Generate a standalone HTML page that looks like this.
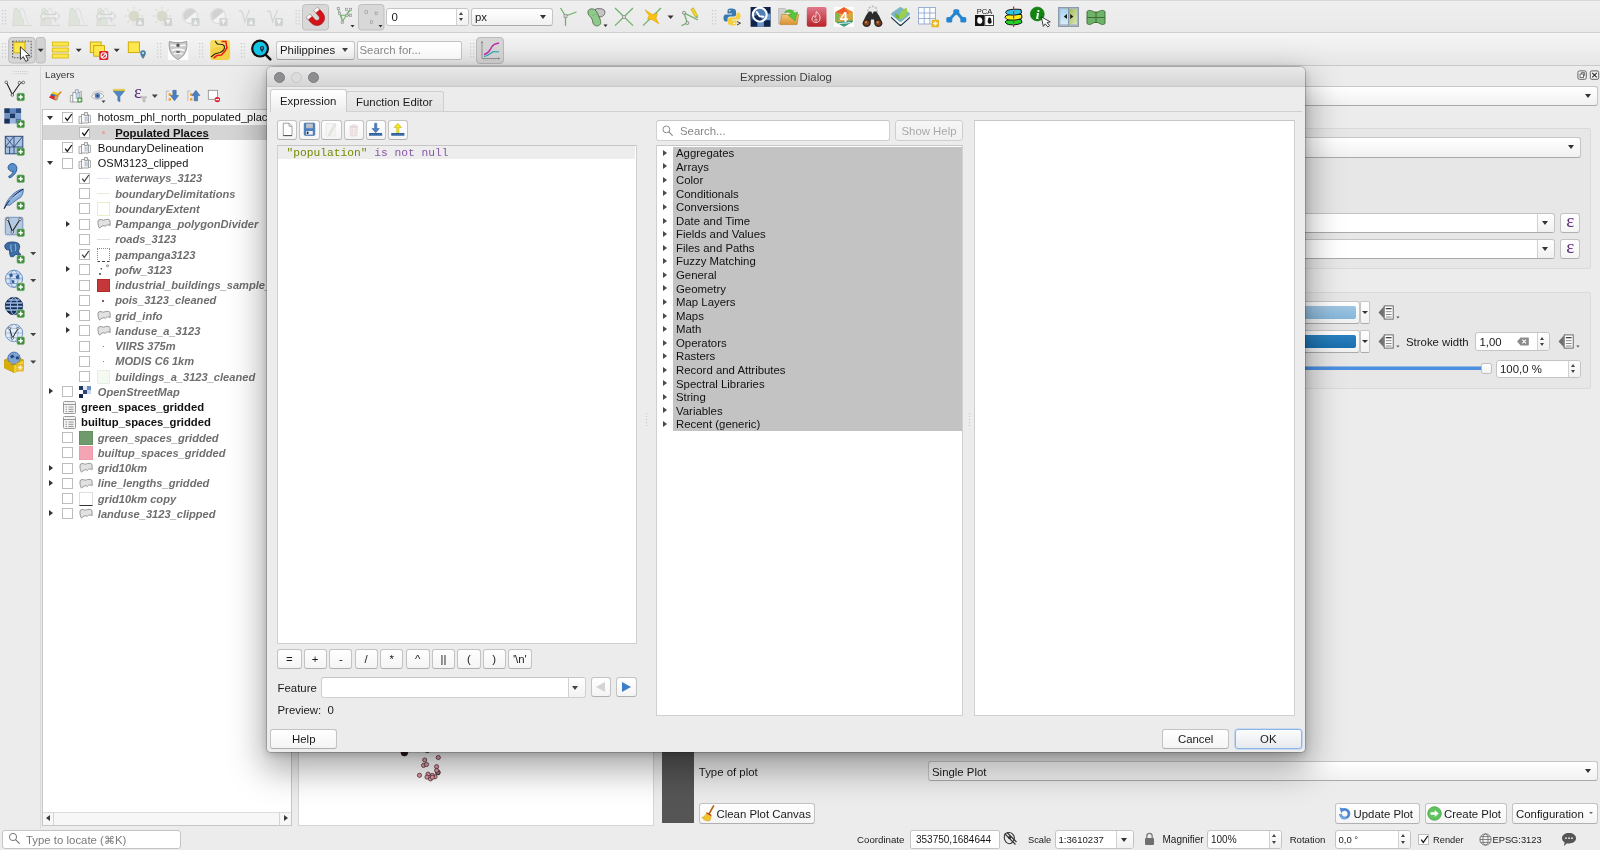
<!DOCTYPE html>
<html><head><meta charset="utf-8"><title>QGIS Expression Dialog</title>
<style>
*{box-sizing:border-box;margin:0;padding:0}
html,body{width:1600px;height:850px;overflow:hidden}
body{background:#ececec;font-family:"Liberation Sans",sans-serif;font-size:11.4px;color:#1a1a1a;position:relative}
.abs{position:absolute}
.t{position:absolute;white-space:nowrap;line-height:14px}
/* toolbars */
#tb1{position:absolute;left:0;top:0;width:1600px;height:33px;background:linear-gradient(#efefef,#e9e9e9);border-top:1px solid #d9d9d9;border-bottom:1px solid #cfcfcf}
#tb2{position:absolute;left:0;top:33px;width:1600px;height:33px;background:linear-gradient(#f5f5f5,#e7e7e7);border-bottom:1px solid #cacaca}
.btn{position:absolute;background:linear-gradient(#ffffff,#f4f4f4);border:1px solid #c3c3c3;border-bottom-color:#b0b0b0;border-radius:3px;text-align:center;line-height:18px}
.field{position:absolute;background:#fff;border:1px solid #d0d0d0;border-top-color:#c6c6c6}
.cb{position:absolute;width:11px;height:11px;background:#fff;border:1px solid #bdbdbd}
/* dialog */
#dlg{position:absolute;left:267px;top:67px;width:1038px;height:685px;background:#ececec;border-radius:5px 5px 4px 4px;box-shadow:0 0 0 1px rgba(0,0,0,.18),0 14px 34px 4px rgba(0,0,0,.34),0 2px 8px rgba(0,0,0,.2)}
#dlgtitle{position:absolute;left:0;top:0;width:100%;height:19.6px;background:linear-gradient(#e8e8e8,#d5d5d5);border-radius:5px 5px 0 0;border-bottom:1px solid #c9c9c9}
#root{position:absolute;left:0;top:0;width:1600px;height:850px;will-change:transform;background:transparent}
</style></head><body>
<div id="root">
<svg width="0" height="0" style="position:absolute"><defs>
<g id="i-grp"><path d="M1 5.5 h3 v7 h-3z" fill="#f4f4f4" stroke="#9a9a9a" stroke-width=".8"/><path d="M3.5 3.5 h7 v8.5 h-7z" fill="#fafafa" stroke="#8a8a8a" stroke-width=".8"/><path d="M6.5 1.5 h3 v3 h-3z" fill="#eee" stroke="#8a8a8a" stroke-width=".8"/><path d="M7.2 5.5 v5 M9 5.5 v5" stroke="#8aa6c8" stroke-width=".9"/><path d="M10.5 4.5 h2 v7 h-2" fill="none" stroke="#9a9a9a" stroke-width=".8"/></g>
<g id="i-poly"><path d="M1 3 C1.5 1 4 1.5 6.5 2.2 C9 1.2 12 .8 13 2.5 L13.2 7.5 C11.5 6.8 9.5 6.5 8.3 8.3 C6.8 7 4 8 2.6 10.2 C1.5 9 .8 6 1 3z" fill="#e2e2e2" stroke="#8d8d8d" stroke-width=".9"/></g>
<g id="i-raster"><rect width="12" height="12" fill="#fff"/><rect x="0" y="0" width="4" height="4" fill="#1f3a63"/><rect x="8" y="0" width="4" height="4" fill="#6d8fc0"/><rect x="4" y="4" width="4" height="4" fill="#27477a"/><rect x="0" y="8" width="4" height="4" fill="#16294a"/><rect x="8" y="4" width="4" height="4" fill="#c7d5ea"/><rect x="4" y="0" width="4" height="4" fill="#dfe8f5"/></g>
<g id="i-table"><rect x=".5" y=".5" width="12" height="12" rx="1" fill="#f3f3f3" stroke="#999"/><path d="M.5 3.5 h12 M2.5 6 h1.5 M5.5 6 h5 M2.5 8.3 h1.5 M5.5 8.3 h5 M2.5 10.5 h1.5 M5.5 10.5 h5" stroke="#8c8c8c" stroke-width=".9"/></g>
<g id="i-dd"><path d="M.5 7.4 L5.8 1.6 V13.2z" fill="#707070"/><rect x="6.2" y=".9" width="9" height="13.2" fill="#fff" stroke="#5a5a5a" stroke-width=".9"/><path d="M7.8 3.7 h5.8" stroke="#222" stroke-width="1.1"/><path d="M7.8 6.7 h5.8 M7.8 9.5 h5.8 M7.8 12 h5.8" stroke="#6a6a6a" stroke-width=".8"/><path d="M18.3 11.6 h3.2 l-1.6 2z" fill="#555"/></g>
<g id="i-broom"><path d="M12.5 1 L8 9" stroke="#b5651d" stroke-width="1.6" stroke-linecap="round"/><path d="M5.5 7.5 L10.5 10.3 L9 15.5 C6 16.5 2.5 15 1 12.5 C3.5 12 5 10 5.5 7.5z" fill="#f2c52e" stroke="#c99a14" stroke-width=".6"/><path d="M5.8 8 L10 10.3" stroke="#c0392b" stroke-width="1.4"/></g>
<g id="i-refresh"><path d="M3.4 7.9 a4.3 4.3 0 1 0 2.2 -3.9" fill="none" stroke="#4c88d2" stroke-width="2.7"/><path d="M2.6 1.6 L7.8 2.9 L4.2 7z" fill="#4c88d2"/><path d="M3.4 7.9 a4.3 4.3 0 0 0 6 4" fill="none" stroke="#86b3e6" stroke-width="1.2"/></g>
<g id="i-go"><circle cx="7.5" cy="7.5" r="6.8" fill="#5fc25c" stroke="#3f9e3d" stroke-width=".7"/><path d="M3.5 6.3 h4.2 v-2.4 l4 3.6 l-4 3.6 v-2.4 h-4.2z" fill="#fff"/></g>
<g id="i-extent"><path d="M2 3 C4 1 8 1 9.5 3 C12 5 12 9 9.5 11 C8 13.5 4.5 13 3 11 C1 9 .8 5 2 3z" fill="none" stroke="#333" stroke-width="1.1"/><path d="M2 3 L12.5 13.5 M4 1.5 L13.5 11" stroke="#333" stroke-width="1.1"/><circle cx="6.5" cy="6.5" r="1.6" fill="#333"/></g>
<g id="i-crs"><circle cx="6.5" cy="6.5" r="5.6" fill="#f4f4f4" stroke="#666" stroke-width=".9"/><ellipse cx="6.5" cy="6.5" rx="2.6" ry="5.6" fill="none" stroke="#666" stroke-width=".8"/><path d="M1 6.5 h11 M1.8 3.6 h9.4 M1.8 9.4 h9.4" stroke="#666" stroke-width=".8"/></g>
<g id="i-msg"><path d="M1 6.2 C1 3 4 1 8 1 C12 1 15 3 15 6.2 C15 9.4 12 11.4 8 11.4 C7.3 11.4 6.7 11.35 6 11.2 L3 14 L3.6 10.3 C2 9.4 1 8 1 6.2z" fill="#555"/><circle cx="5" cy="6.2" r=".9" fill="#eee"/><circle cx="8" cy="6.2" r=".9" fill="#eee"/><circle cx="11" cy="6.2" r=".9" fill="#eee"/></g>
</defs></svg>
<div id="tb1"></div>
<div id="tb2"></div>
<div id="tbicons">
<svg class="abs" style="left:0;top:0" width="1600" height="66" viewBox="0 0 1600 66"><rect x="2.0" y="10.0" width="1.2" height="1.2" fill="#c9c9c9"/><rect x="5.0" y="10.0" width="1.2" height="1.2" fill="#c9c9c9"/><rect x="2.0" y="13.3" width="1.2" height="1.2" fill="#c9c9c9"/><rect x="5.0" y="13.3" width="1.2" height="1.2" fill="#c9c9c9"/><rect x="2.0" y="16.6" width="1.2" height="1.2" fill="#c9c9c9"/><rect x="5.0" y="16.6" width="1.2" height="1.2" fill="#c9c9c9"/><rect x="2.0" y="19.9" width="1.2" height="1.2" fill="#c9c9c9"/><rect x="5.0" y="19.9" width="1.2" height="1.2" fill="#c9c9c9"/><rect x="2.0" y="23.2" width="1.2" height="1.2" fill="#c9c9c9"/><rect x="5.0" y="23.2" width="1.2" height="1.2" fill="#c9c9c9"/><rect x="295.5" y="10.0" width="1.2" height="1.2" fill="#c9c9c9"/><rect x="298.5" y="10.0" width="1.2" height="1.2" fill="#c9c9c9"/><rect x="295.5" y="13.3" width="1.2" height="1.2" fill="#c9c9c9"/><rect x="298.5" y="13.3" width="1.2" height="1.2" fill="#c9c9c9"/><rect x="295.5" y="16.6" width="1.2" height="1.2" fill="#c9c9c9"/><rect x="298.5" y="16.6" width="1.2" height="1.2" fill="#c9c9c9"/><rect x="295.5" y="19.9" width="1.2" height="1.2" fill="#c9c9c9"/><rect x="298.5" y="19.9" width="1.2" height="1.2" fill="#c9c9c9"/><rect x="295.5" y="23.2" width="1.2" height="1.2" fill="#c9c9c9"/><rect x="298.5" y="23.2" width="1.2" height="1.2" fill="#c9c9c9"/><rect x="712.0" y="10.0" width="1.2" height="1.2" fill="#c9c9c9"/><rect x="715.0" y="10.0" width="1.2" height="1.2" fill="#c9c9c9"/><rect x="712.0" y="13.3" width="1.2" height="1.2" fill="#c9c9c9"/><rect x="715.0" y="13.3" width="1.2" height="1.2" fill="#c9c9c9"/><rect x="712.0" y="16.6" width="1.2" height="1.2" fill="#c9c9c9"/><rect x="715.0" y="16.6" width="1.2" height="1.2" fill="#c9c9c9"/><rect x="712.0" y="19.9" width="1.2" height="1.2" fill="#c9c9c9"/><rect x="715.0" y="19.9" width="1.2" height="1.2" fill="#c9c9c9"/><rect x="712.0" y="23.2" width="1.2" height="1.2" fill="#c9c9c9"/><rect x="715.0" y="23.2" width="1.2" height="1.2" fill="#c9c9c9"/><rect x="2.0" y="43.0" width="1.2" height="1.2" fill="#c9c9c9"/><rect x="5.0" y="43.0" width="1.2" height="1.2" fill="#c9c9c9"/><rect x="2.0" y="46.3" width="1.2" height="1.2" fill="#c9c9c9"/><rect x="5.0" y="46.3" width="1.2" height="1.2" fill="#c9c9c9"/><rect x="2.0" y="49.6" width="1.2" height="1.2" fill="#c9c9c9"/><rect x="5.0" y="49.6" width="1.2" height="1.2" fill="#c9c9c9"/><rect x="2.0" y="52.9" width="1.2" height="1.2" fill="#c9c9c9"/><rect x="5.0" y="52.9" width="1.2" height="1.2" fill="#c9c9c9"/><rect x="2.0" y="56.2" width="1.2" height="1.2" fill="#c9c9c9"/><rect x="5.0" y="56.2" width="1.2" height="1.2" fill="#c9c9c9"/><rect x="157.0" y="43.0" width="1.2" height="1.2" fill="#c9c9c9"/><rect x="160.0" y="43.0" width="1.2" height="1.2" fill="#c9c9c9"/><rect x="157.0" y="46.3" width="1.2" height="1.2" fill="#c9c9c9"/><rect x="160.0" y="46.3" width="1.2" height="1.2" fill="#c9c9c9"/><rect x="157.0" y="49.6" width="1.2" height="1.2" fill="#c9c9c9"/><rect x="160.0" y="49.6" width="1.2" height="1.2" fill="#c9c9c9"/><rect x="157.0" y="52.9" width="1.2" height="1.2" fill="#c9c9c9"/><rect x="160.0" y="52.9" width="1.2" height="1.2" fill="#c9c9c9"/><rect x="157.0" y="56.2" width="1.2" height="1.2" fill="#c9c9c9"/><rect x="160.0" y="56.2" width="1.2" height="1.2" fill="#c9c9c9"/><rect x="199.0" y="43.0" width="1.2" height="1.2" fill="#c9c9c9"/><rect x="202.0" y="43.0" width="1.2" height="1.2" fill="#c9c9c9"/><rect x="199.0" y="46.3" width="1.2" height="1.2" fill="#c9c9c9"/><rect x="202.0" y="46.3" width="1.2" height="1.2" fill="#c9c9c9"/><rect x="199.0" y="49.6" width="1.2" height="1.2" fill="#c9c9c9"/><rect x="202.0" y="49.6" width="1.2" height="1.2" fill="#c9c9c9"/><rect x="199.0" y="52.9" width="1.2" height="1.2" fill="#c9c9c9"/><rect x="202.0" y="52.9" width="1.2" height="1.2" fill="#c9c9c9"/><rect x="199.0" y="56.2" width="1.2" height="1.2" fill="#c9c9c9"/><rect x="202.0" y="56.2" width="1.2" height="1.2" fill="#c9c9c9"/><rect x="240.8" y="43.0" width="1.2" height="1.2" fill="#c9c9c9"/><rect x="243.8" y="43.0" width="1.2" height="1.2" fill="#c9c9c9"/><rect x="240.8" y="46.3" width="1.2" height="1.2" fill="#c9c9c9"/><rect x="243.8" y="46.3" width="1.2" height="1.2" fill="#c9c9c9"/><rect x="240.8" y="49.6" width="1.2" height="1.2" fill="#c9c9c9"/><rect x="243.8" y="49.6" width="1.2" height="1.2" fill="#c9c9c9"/><rect x="240.8" y="52.9" width="1.2" height="1.2" fill="#c9c9c9"/><rect x="243.8" y="52.9" width="1.2" height="1.2" fill="#c9c9c9"/><rect x="240.8" y="56.2" width="1.2" height="1.2" fill="#c9c9c9"/><rect x="243.8" y="56.2" width="1.2" height="1.2" fill="#c9c9c9"/><rect x="470.0" y="43.0" width="1.2" height="1.2" fill="#c9c9c9"/><rect x="473.0" y="43.0" width="1.2" height="1.2" fill="#c9c9c9"/><rect x="470.0" y="46.3" width="1.2" height="1.2" fill="#c9c9c9"/><rect x="473.0" y="46.3" width="1.2" height="1.2" fill="#c9c9c9"/><rect x="470.0" y="49.6" width="1.2" height="1.2" fill="#c9c9c9"/><rect x="473.0" y="49.6" width="1.2" height="1.2" fill="#c9c9c9"/><rect x="470.0" y="52.9" width="1.2" height="1.2" fill="#c9c9c9"/><rect x="473.0" y="52.9" width="1.2" height="1.2" fill="#c9c9c9"/><rect x="470.0" y="56.2" width="1.2" height="1.2" fill="#c9c9c9"/><rect x="473.0" y="56.2" width="1.2" height="1.2" fill="#c9c9c9"/>


<path d="M12.8 25.5 L13.8 11 Q14.5 8 16.0 8 Q19.0 9 20.5 14 Q22.0 22 24.5 25.5z" fill="#dde4da" stroke="#d3d8d0" stroke-width=".7"/><path d="M19.5 11 Q20.5 8 22.0 8 Q24.0 9 25.0 14 C26.2 21 28.2 25 31.7 25.5 L24.5 25.5 Q22.0 22 20.5 14z" fill="#ececec" stroke="#d9d9d9" stroke-width=".7"/><path d="M14.1 18 V25.5 M23.5 18 V25.5" stroke="#ead9d9" stroke-width=".9"/><path d="M12.0 25.7 H32.0" stroke="#d6d9d3" stroke-width=".8"/>
<path d="M40.8 25.5 L41.8 11 Q42.5 8 44.0 8 Q47.0 9 48.5 14 Q50.0 22 52.5 25.5z" fill="#dde4da" stroke="#d3d8d0" stroke-width=".7"/><path d="M47.5 11 Q48.5 8 50.0 8 Q52.0 9 53.0 14 C54.2 21 56.2 25 59.7 25.5 L52.5 25.5 Q50.0 22 48.5 14z" fill="#ececec" stroke="#d9d9d9" stroke-width=".7"/><path d="M42.1 18 V25.5 M51.5 18 V25.5" stroke="#ead9d9" stroke-width=".9"/><path d="M40.0 25.7 H60.0" stroke="#d6d9d3" stroke-width=".8"/><path d="M40 16.3 l4.6 -4.5 v2.8 h10.8 v-2.8 l4.6 4.5 l-4.6 4.5 v-2.8 h-10.8 v2.8z" fill="#f0f0f0" fill-opacity=".55" stroke="#cfcfcf" stroke-width="1"/>
<path d="M68.8 25.5 L69.8 11 Q70.5 8 72.0 8 Q75.0 9 76.5 14 Q78.0 22 80.5 25.5z" fill="#dde4da" stroke="#d3d8d0" stroke-width=".7"/><path d="M75.5 11 Q76.5 8 78.0 8 Q80.0 9 81.0 14 C82.2 21 84.2 25 87.7 25.5 L80.5 25.5 Q78.0 22 76.5 14z" fill="#ececec" stroke="#d9d9d9" stroke-width=".7"/><path d="M70.1 18 V25.5 M79.5 18 V25.5" stroke="#ead9d9" stroke-width=".9"/><path d="M68.0 25.7 H88.0" stroke="#d6d9d3" stroke-width=".8"/>
<path d="M96.8 25.5 L97.8 11 Q98.5 8 100.0 8 Q103.0 9 104.5 14 Q106.0 22 108.5 25.5z" fill="#dde4da" stroke="#d3d8d0" stroke-width=".7"/><path d="M103.5 11 Q104.5 8 106.0 8 Q108.0 9 109.0 14 C110.2 21 112.2 25 115.7 25.5 L108.5 25.5 Q106.0 22 104.5 14z" fill="#ececec" stroke="#d9d9d9" stroke-width=".7"/><path d="M98.1 18 V25.5 M107.5 18 V25.5" stroke="#ead9d9" stroke-width=".9"/><path d="M96.0 25.7 H116.0" stroke="#d6d9d3" stroke-width=".8"/><path d="M96 16.3 l4.6 -4.5 v2.8 h10.8 v-2.8 l4.6 4.5 l-4.6 4.5 v-2.8 h-10.8 v2.8z" fill="#f0f0f0" fill-opacity=".55" stroke="#cfcfcf" stroke-width="1"/>
<circle cx="134" cy="16" r="5.5" fill="#d9d9cb"/><path d="M141.2 16.0 L143.3 16.0" stroke="#d9d9cb" stroke-width="1.1"/><path d="M139.1 21.1 L140.6 22.6" stroke="#d9d9cb" stroke-width="1.1"/><path d="M134.0 23.2 L134.0 25.3" stroke="#d9d9cb" stroke-width="1.1"/><path d="M128.9 21.1 L127.4 22.6" stroke="#d9d9cb" stroke-width="1.1"/><path d="M126.8 16.0 L124.7 16.0" stroke="#d9d9cb" stroke-width="1.1"/><path d="M128.9 10.9 L127.4 9.4" stroke="#d9d9cb" stroke-width="1.1"/><path d="M134.0 8.8 L134.0 6.7" stroke="#d9d9cb" stroke-width="1.1"/><path d="M139.1 10.9 L140.6 9.4" stroke="#d9d9cb" stroke-width="1.1"/><rect x="136" y="18" width="8" height="8" rx="1" fill="#cfd3cf"/><path d="M137.6 24.5 L140 19.5 L142.4 24.5z" fill="#f2f2f2"/>
<circle cx="162" cy="16" r="5.5" fill="#d9d9cb"/><path d="M169.2 16.0 L171.3 16.0" stroke="#d9d9cb" stroke-width="1.1"/><path d="M167.1 21.1 L168.6 22.6" stroke="#d9d9cb" stroke-width="1.1"/><path d="M162.0 23.2 L162.0 25.3" stroke="#d9d9cb" stroke-width="1.1"/><path d="M156.9 21.1 L155.4 22.6" stroke="#d9d9cb" stroke-width="1.1"/><path d="M154.8 16.0 L152.7 16.0" stroke="#d9d9cb" stroke-width="1.1"/><path d="M156.9 10.9 L155.4 9.4" stroke="#d9d9cb" stroke-width="1.1"/><path d="M162.0 8.8 L162.0 6.7" stroke="#d9d9cb" stroke-width="1.1"/><path d="M167.1 10.9 L168.6 9.4" stroke="#d9d9cb" stroke-width="1.1"/><rect x="164" y="18" width="8" height="8" rx="1" fill="#cfd3cf"/><path d="M165.6 19.5 L168 24.5 L170.4 19.5z" fill="#f2f2f2"/>
<circle cx="190" cy="16" r="7.5" fill="#f3f3f3" stroke="#d9d9d9" stroke-width="1"/><path d="M185 20.5 A7 7 0 0 1 196 11.5z" fill="#d2d2d2"/><rect x="191.5" y="18" width="8" height="8" rx="1" fill="#cfd3cf"/><path d="M193.1 24.5 L195.5 19.5 L197.9 24.5z" fill="#f2f2f2"/>
<circle cx="218" cy="16" r="7.5" fill="#f3f3f3" stroke="#d9d9d9" stroke-width="1"/><path d="M213 20.5 A7 7 0 0 1 224 11.5z" fill="#d2d2d2"/><rect x="219.5" y="18" width="8" height="8" rx="1" fill="#cfd3cf"/><path d="M221.1 19.5 L223.5 24.5 L225.9 19.5z" fill="#f2f2f2"/>
<path d="M239 11.5 Q241 9.5 242.5 13 L245 23 M249.5 10 L245 21" fill="none" stroke="#d4d4d4" stroke-width="1.2"/><rect x="247" y="18" width="8" height="8" rx="1" fill="#cfd3cf"/><path d="M248.6 24.5 L251 19.5 L253.4 24.5z" fill="#f2f2f2"/>
<path d="M267 11.5 Q269 9.5 270.5 13 L273 23 M277.5 10 L273 21" fill="none" stroke="#d4d4d4" stroke-width="1.2"/><rect x="275" y="18" width="8" height="8" rx="1" fill="#cfd3cf"/><path d="M276.6 19.5 L279 24.5 L281.4 19.5z" fill="#f2f2f2"/>
<rect x="302.5" y="4.5" width="26" height="25.5" rx="3" fill="#d8d8d8" stroke="#bfbfbf" stroke-width="1"/>
<g transform="translate(316.3 17.2) rotate(-42)"><path d="M-7.6 -6.5 H-2.6 V1 A2.6 2.6 0 0 0 2.6 1 V-6.5 H7.6 V1 A7.6 7.6 0 0 1 -7.6 1z" fill="#d41217" stroke="#a30c10" stroke-width=".6"/><rect x="-7.6" y="-6.8" width="5" height="3.2" fill="#f6f6f6" stroke="#b0b0b0" stroke-width=".4"/><rect x="2.6" y="-6.8" width="5" height="3.2" fill="#f6f6f6" stroke="#b0b0b0" stroke-width=".4"/></g>
<path d="M338.5 10 L342.5 21.5 L349 10.5 M342.5 21.5 L341 15 L350 15.5 M345.8 16 L350.5 10" fill="none" stroke="#6fb36b" stroke-width="1.1"/>
<rect x="337.2" y="7.5" width="2.2" height="2.2" fill="#e4e4e4" stroke="#8c8c8c" stroke-width=".6"/>
<rect x="345.4" y="8.200000000000001" width="2.2" height="2.2" fill="#e4e4e4" stroke="#8c8c8c" stroke-width=".6"/>
<rect x="349.5" y="8.200000000000001" width="2.2" height="2.2" fill="#e4e4e4" stroke="#8c8c8c" stroke-width=".6"/>
<rect x="338.4" y="12.1" width="2.2" height="2.2" fill="#e4e4e4" stroke="#8c8c8c" stroke-width=".6"/>
<rect x="349.5" y="14.1" width="2.2" height="2.2" fill="#e4e4e4" stroke="#8c8c8c" stroke-width=".6"/>
<rect x="345.9" y="14.4" width="2.2" height="2.2" fill="#e4e4e4" stroke="#8c8c8c" stroke-width=".6"/>
<rect x="341.2" y="21.2" width="2.2" height="2.2" fill="#e4e4e4" stroke="#8c8c8c" stroke-width=".6"/>
<path d="M350.5 25 h4 l-2 2.4z" fill="#333"/>
<rect x="358.5" y="4.5" width="25.5" height="25.5" rx="3" fill="#d8d8d8" stroke="#bfbfbf" stroke-width="1"/>
<rect x="365.0" y="10.8" width="2.4" height="2.4" fill="#e2e2e2" stroke="#8a8a8a" stroke-width=".6"/>
<rect x="375.1" y="12.100000000000001" width="2.4" height="2.4" fill="#e2e2e2" stroke="#8a8a8a" stroke-width=".6"/>
<rect x="370.3" y="20.8" width="2.4" height="2.4" fill="#e2e2e2" stroke="#8a8a8a" stroke-width=".6"/>
<path d="M378.5 25 h4 l-2 2.4z" fill="#333"/>
<path d="M560.5 8 L565.5 16 L576.5 12 M565.5 16 V25.8" fill="none" stroke="#6db36a" stroke-width="1.3"/><rect x="564" y="14.6" width="3" height="3" fill="#d8d8d8" stroke="#8a8a8a" stroke-width=".7"/>
<path d="M595 9.5 C598 7.8 604 8.6 604.8 11 C605.3 14 603.5 16.8 600 17 L596.5 15z" fill="#c4c4c4" stroke="#555" stroke-width=".8"/><path d="M588 11.5 C588.5 8.8 592 8.2 594.5 9.5 C597.5 11.5 598 15 599.5 18 C601 21 601.5 24.5 598.5 25.6 C595.5 26.5 593.3 25 592.8 22.3 C592.5 19.5 591.5 18 590 16.5 C588.5 15 587.6 13.5 588 11.5z" fill="#8fca8b" stroke="#3f5f3c" stroke-width=".8"/><path d="M592.5 15.5 L596.5 14" stroke="#5f9a5b" stroke-width=".7" stroke-dasharray="1 .8"/><path d="M603.5 24.6 h4 l-2 2.4z" fill="#222"/>
<path d="M615 8 L633 25.6 M633 8 L615 25.6" stroke="#6db36a" stroke-width="1.3"/><rect x="622.5" y="15.4" width="3" height="3" fill="#d8d8d8" stroke="#8a8a8a" stroke-width=".7"/>
<path d="M643 25.6 L661 8" stroke="#6db36a" stroke-width="1.3"/><path d="M645 9.8 L652.3 14.6 L657.2 13.3 L656 18.6 L658.8 23.8 L652 19.4 L647.6 19.2 L649 15.5z" fill="#f7c30f" stroke="#e79d00" stroke-width=".6"/>
<path d="M667.6 15.6 h6 l-3 3.4z" fill="#333"/>
<path d="M684 12.8 L698 20 M684 12.8 L687.3 23 L681.5 25.6" fill="none" stroke="#6db36a" stroke-width="1.3"/><circle cx="684" cy="12.8" r="1.6" fill="#dcdcdc" stroke="#7a7a7a" stroke-width=".7"/><circle cx="687.3" cy="23" r="1.6" fill="#dcdcdc" stroke="#7a7a7a" stroke-width=".7"/><path d="M690.8 9.3 L693.4 7.8 L697.6 15.6 L697.4 17.8 L695.2 17z" fill="#f0d428" stroke="#b89b00" stroke-width=".5"/><path d="M695.2 17 L697.6 15.6 L697.4 17.8z" fill="#999"/>
<path d="M731.5 8.5 C727.5 8.5 727.5 10 727.5 11.5 V13.5 H732 V14.5 H726 C724 14.5 723.5 16 723.5 18 C723.5 20 724 21.5 726 21.5 H727.5 V19 C727.5 17.5 728.5 16.5 730 16.5 H734 C735.5 16.5 736 15.5 736 14.5 V11.5 C736 9.5 734.5 8.5 731.5 8.5z" fill="#3a7ab0"/><path d="M732.5 25.5 C736.5 25.5 736.5 24 736.5 22.5 V20.5 H732 V19.5 H738 C740 19.5 740.5 18 740.5 16 C740.5 14 740 12.5 738 12.5 H736.5 V15 C736.5 16.5 735.5 17.5 734 17.5 H730 C728.5 17.5 728 18.5 728 19.5 V22.5 C728 24.5 729.5 25.5 732.5 25.5z" fill="#f5cf3c"/><circle cx="729.7" cy="10.8" r=".8" fill="#fff"/><circle cx="734.3" cy="23.2" r=".8" fill="#fff"/><path d="M737 21.5 l3.5 1.7 l-3.5 1.7" fill="none" stroke="#222" stroke-width=".9"/>
<rect x="750.6" y="7" width="20" height="19.8" fill="#10244a"/><rect x="757.3" y="7" width="6.6" height="6.6" fill="#2b4a7e"/><rect x="750.6" y="13.6" width="6.7" height="6.6" fill="#2b4a7e"/><rect x="763.9" y="13.6" width="6.7" height="6.6" fill="#6b97cc"/><rect x="757.3" y="20.2" width="6.6" height="6.6" fill="#6b97cc"/><rect x="757.3" y="13.6" width="6.6" height="6.6" fill="#3f6aa6"/>
<circle cx="759.8" cy="14.6" r="6.9" fill="#4f7fb8" stroke="#fff" stroke-width="2.1"/><path d="M754 16 A6 6 0 0 0 762 20 L759.8 14.6z" fill="#142b55"/><path d="M756.8 12 L759.5 16.3 L763.5 16.8" fill="none" stroke="#fff" stroke-width="1.9" stroke-linecap="round" stroke-linejoin="round"/>
<path d="M778.6 8.5 h6.5 l1.5 1.8 h8.5 v13.5 h-16.5z" fill="#d0d0d0" stroke="#aaa" stroke-width=".6"/><path d="M786 10.5 h9.5 l1.8 2 v4 h-11.3z" fill="#f4f4f4" stroke="#bbb" stroke-width=".5"/><defs><linearGradient id="fo" x1="0" y1="0" x2="0" y2="1"><stop offset="0" stop-color="#f3c67a"/><stop offset="1" stop-color="#d8922e"/></linearGradient></defs><path d="M780 24.6 L781.8 14.5 H798.8 L797 24.6z" fill="url(#fo)" stroke="#b77a24" stroke-width=".6"/><path d="M784.5 12.5 C787 9 792.5 8.8 794.6 13 L797.6 12.2 L795 20.8 L788.3 15.4 L791.3 14.3 C790 12.3 787 12 784.5 12.5z" fill="#5cc33c" stroke="#3a9a22" stroke-width=".5"/>
<defs><linearGradient id="rg" x1="0" y1="0" x2="0" y2="1"><stop offset="0" stop-color="#e0788a"/><stop offset="1" stop-color="#b72226"/></linearGradient></defs><rect x="806.8" y="7" width="19.7" height="19.7" rx="2" fill="url(#rg)"/><path d="M816.5 11.5 C819 14 820.5 16 820 19 C819.5 21.5 818 22.5 816 22.5 C813.5 22.5 812 21 812 19 C812 17.5 813 16.5 813.8 15.5 C814 17 814.8 17.6 815.5 17.2 C816.5 15.5 815.5 13.5 816.5 11.5z" fill="none" stroke="#f7dfe0" stroke-width=".9"/><circle cx="816" cy="20" r="1.2" fill="none" stroke="#f7dfe0" stroke-width=".7"/>
<rect x="834" y="7" width="20" height="20" fill="#fdfdfd"/><path d="M844 7.3 L852.8 12.2 V21.8 L844 26.7 L835.2 21.8 V12.2z" fill="#e9a33a"/><path d="M844 7.3 L852.8 12.2 L844 14.5 L835.2 12.2z" fill="#ee5a2e"/><path d="M844 7.3 L852.8 12.2 L849 13.5z" fill="#f58a2c"/><path d="M835.2 12.2 L840 14 L838 23.3 L835.2 21.8z" fill="#86b34d"/><path d="M852.8 14 V21.8 L849.5 23.6 L848 16z" fill="#c9a845"/><path d="M836.5 22.5 C840 21 848 21.5 852.3 20 L852.8 21.8 L844 26.7z" fill="#2f9c86"/><path d="M838.5 23.7 C842 23 847 23.3 850.5 22.5" stroke="#fff" stroke-width=".9" fill="none"/><text x="844" y="22.3" text-anchor="middle" font-family="Liberation Sans,sans-serif" font-weight="bold" font-size="14" fill="#fff">4</text>
<circle cx="872.5" cy="11" r="4.6" fill="#eaeaea" stroke="#bdbdbd" stroke-width="1.6" stroke-dasharray="2 1.4"/><path d="M866 15.5 L868.8 11.5 H871.3 L872.5 14 L873.7 11.5 H876.2 L879 15.5 L882.5 23 A4.2 4.2 0 0 1 874.5 24.5 L874 19.5 H871 L870.5 24.5 A4.2 4.2 0 0 1 862.5 23z" fill="#2b2b2b"/><circle cx="866.7" cy="23" r="3.2" fill="#7a3f1d" stroke="#1d1d1d" stroke-width=".8"/><circle cx="878.3" cy="23" r="3.2" fill="#7a3f1d" stroke="#1d1d1d" stroke-width=".8"/><circle cx="866" cy="22.3" r="1.1" fill="#d98a4a"/><circle cx="877.6" cy="22.3" r="1.1" fill="#d98a4a"/>
<path d="M891.5 18.5 Q890.3 17.5 891.5 16.5 L899.3 10.5 Q900.5 9.7 901.7 10.5 L909.5 16.5 Q910.7 17.5 909.5 18.5 L901.7 25.5 Q900.5 26.5 899.3 25.5z" fill="#12303f"/><path d="M891.5 17 Q890.3 16 891.5 15 L899.3 9 Q900.5 8.2 901.7 9 L909.5 15 Q910.7 16 909.5 17 L901.7 24 Q900.5 25 899.3 24z" fill="#f3f6f7"/><path d="M891.5 15 Q890.3 14 891.5 13 L899.3 7.5 Q900.5 6.7 901.7 7.5 L909.5 13 Q910.7 14 909.5 15 L901.7 21.5 Q900.5 22.5 899.3 21.5z" fill="#7db4c6"/><path d="M895 13.5 C897.5 13.8 900 15.8 900.3 19.3 C897 19.5 895 17 895 13.5z" fill="#6db52c"/><path d="M899.5 19.5 C898.5 14 902 9.5 906.5 7.8 C908.5 12.5 906 18.5 899.5 19.5z" fill="#9bd14a"/>
<rect x="918.5" y="7.5" width="17" height="16.5" fill="#fbfcfe" stroke="#93a9cf" stroke-width=".9"/><path d="M924.2 7.5 V24 M929.8 7.5 V24 M918.5 13 H935.5 M918.5 18.5 H935.5" stroke="#93a9cf" stroke-width=".9"/><rect x="931.5" y="19.8" width="7.5" height="7.5" rx="1" fill="#e6b422"/><path d="M935.25 21 v5 M932.8 23.5 h5 M933.5 21.8 l3.5 3.5 M937 21.8 l-3.5 3.5" stroke="#fff8dc" stroke-width=".9"/>
<path d="M949.3 19.8 L956.3 12 L963.3 19.8" fill="none" stroke="#2585d0" stroke-width="2.8" stroke-linejoin="round"/><rect x="953.3" y="9.2" width="6" height="5.6" rx="1.6" fill="#2585d0"/><rect x="946.3" y="17" width="6" height="5.6" rx="1.6" fill="#2585d0"/><rect x="960.3" y="17" width="6" height="5.6" rx="1.6" fill="#2585d0"/>
<text x="984.5" y="14" text-anchor="middle" font-family="Liberation Sans,sans-serif" font-size="7.6" fill="#222">PCA</text><rect x="975" y="15" width="9.3" height="11" fill="#151515"/><rect x="984.8" y="15.4" width="8.8" height="10.2" fill="#fff" stroke="#151515" stroke-width=".8"/><path d="M978.5 17.3 C981 16.8 982.8 19 982.3 21.5 C981.8 23.8 979.3 24.5 977.8 23 C976.8 21.5 977 18.3 978.5 17.3z" fill="#fff"/><path d="M989 17.3 C990.8 17.5 991.5 19 991.3 20.5 C992.3 22 991.5 23.8 989.8 23.8 C988 23.8 987.3 22 987.8 20.3 C988 19 988.3 18 989 17.3z" fill="#151515"/>
<path d="M1006.5 20.5 C1010 19 1016 19 1021 19.5 L1022 22.5 C1019 25 1011 25.5 1007 24 L1005 22z" fill="#22d02a" stroke="#111" stroke-width="1"/><path d="M1006 15.5 C1010 14 1016 14 1021.5 14.5 L1022 18 C1018 20.5 1011 20.5 1007 19.5 L1005 17.5z" fill="#f4ee1e" stroke="#111" stroke-width="1"/><path d="M1007 10.5 C1011 9 1016 9 1021 9.5 L1021.5 13 C1018 15.5 1011 15.5 1007.5 14.5 L1005.5 12.5z" fill="#2fc4e6" stroke="#111" stroke-width="1"/><path d="M1013.6 6.5 V27" stroke="#ee1c25" stroke-width="1.2" stroke-dasharray="3.2 1.2"/>
<circle cx="1037.3" cy="14" r="7" fill="#108510" stroke="#0b6a0b" stroke-width=".5"/><text x="1037.6" y="18.6" text-anchor="middle" font-family="Liberation Serif,serif" font-style="italic" font-weight="bold" font-size="13.5" fill="#fff">i</text><path d="M1041.3 16.8 V26.6 L1043.7 24.5 L1045.6 28.1 L1047.6 27.1 L1045.8 23.6 H1049z" fill="#fff" stroke="#222" stroke-width=".8" transform="rotate(-12 1041.3 16.8)"/>
<defs><linearGradient id="sk" x1="0" y1="0" x2="0" y2="1"><stop offset="0" stop-color="#a6d3f0"/><stop offset="1" stop-color="#d8ecf8"/></linearGradient><linearGradient id="ol" x1="0" y1="0" x2="1" y2="1"><stop offset="0" stop-color="#9fbb55"/><stop offset="1" stop-color="#dde8b8"/></linearGradient></defs><rect x="1058.5" y="7.5" width="20" height="19" fill="#aab6c4" stroke="#8d9aab" stroke-width="1"/><rect x="1060.3" y="9" width="8" height="15.3" fill="url(#sk)"/><rect x="1069" y="9" width="7.8" height="15.3" fill="url(#ol)"/><path d="M1068.6 8 V25.5" stroke="#7d8da3" stroke-width=".9"/><path d="M1063.8 16.5 l3.2 -2.6 v5.2z M1073.4 16.5 l-3.2 -2.6 v5.2z" fill="#1a1a1a"/>
<path d="M1087 11.5 C1089 9.5 1092 10.5 1094 12 H1098 C1100 10.5 1103 9.5 1105 11.5 V23.5 C1103 25.5 1100 24 1098 22.5 H1094 C1092 24 1089 25.5 1087 23.5z" fill="#6fb36b" stroke="#35682f" stroke-width=".9"/><path d="M1087 17.5 H1105 M1096 12 V22.5" stroke="#35682f" stroke-width=".9"/>





<rect x="8.7" y="37.5" width="26.5" height="25.5" rx="3.5" fill="#d6d6d6" stroke="#bbb" stroke-width="1"/>
<rect x="36.2" y="37.5" width="9" height="25.5" rx="2.5" fill="#d3d3d3" stroke="#bdbdbd" stroke-width="1"/>
<path d="M37.7 48.7 h6 l-3 3.4z" fill="#333"/>
<rect x="12.6" y="41.2" width="18.6" height="16.6" fill="none" stroke="#555" stroke-width="1" stroke-dasharray="1.6 1.4"/><rect x="13.8" y="42.3" width="11.2" height="10.6" fill="#fde74c" stroke="#c9a500" stroke-width=".9"/><path d="M20.4 46.8 V59.3 L23.3 56.6 L25.8 61.4 L28.2 60.2 L25.8 55.6 H29.8z" fill="#fff" stroke="#222" stroke-width=".9"/>
<rect x="52.3" y="42" width="16" height="4" fill="#fde74c" stroke="#d4b106" stroke-width=".8"/>
<rect x="52.3" y="48" width="16" height="4" fill="#fde74c" stroke="#d4b106" stroke-width=".8"/>
<rect x="52.3" y="54" width="16" height="4" fill="#fde74c" stroke="#d4b106" stroke-width=".8"/>
<path d="M75.7 48.7 h6 l-3 3.4z" fill="#333"/>
<rect x="90.3" y="42" width="10.8" height="10.6" fill="#fde74c" stroke="#c9a500" stroke-width=".9"/><rect x="93.7" y="45.6" width="10.8" height="10.6" fill="#fde74c" stroke="#c9a500" stroke-width=".9"/><rect x="99.3" y="51" width="9" height="9" rx="1.2" fill="#dc2430"/><circle cx="103.8" cy="55.5" r="2.7" fill="none" stroke="#fff" stroke-width="1.1"/><path d="M101.9 57.4 L105.7 53.6" stroke="#fff" stroke-width="1.1"/>
<path d="M113.7 48.7 h6 l-3 3.4z" fill="#333"/>
<rect x="128.3" y="42" width="11.2" height="10.6" fill="#fde74c" stroke="#c9a500" stroke-width=".9"/><path d="M143 59 C141 56 140.2 54.5 140.2 53 A2.8 2.8 0 0 1 145.8 53 C145.8 54.5 145 56 143 59z" fill="#4a7fa5"/><circle cx="143" cy="53" r="1" fill="#e8eef4"/>
<rect x="168" y="40" width="20.2" height="20" fill="#fdfdfd"/><path d="M169.3 41.3 C173 43 183 43 186.7 41.3 C187.7 48 186 55.5 178 59.6 C170 55.5 168.3 48 169.3 41.3z" fill="#c9c9c9" stroke="#8a8a8a" stroke-width=".8"/><path d="M170.5 45.5 C173 44.5 175 46.5 176 45.5 M180 45.5 C181 46.5 183 44.5 185.5 45.5" stroke="#fafafa" stroke-width="1.6" fill="none"/><path d="M171.5 50.5 C175 49 181 49 184.5 50.5" stroke="#fafafa" stroke-width="1.8" fill="none"/><path d="M173.5 54.2 C176 53.2 180 53.2 182.5 54.2" stroke="#f4f4f4" stroke-width="1.4" fill="none"/><rect x="176.2" y="43.2" width="3.6" height="4" rx="1" fill="#555" stroke="#eee" stroke-width=".5"/><path d="M176.3 52 h3.4" stroke="#333" stroke-width="1.2"/>
<rect x="210.3" y="40" width="19.8" height="20" rx="3.2" fill="#f2d244"/><path d="M210.3 50 C216 46.5 223 45.5 230.1 47 V43.2 A3.2 3.2 0 0 0 226.9 40 H213.5 A3.2 3.2 0 0 0 210.3 43.2z" fill="#f7df6a" opacity=".8"/><path d="M221.5 41.5 L226 41.4 L226.4 45.5 L227 47.5 L224.8 51.3 L221.5 55 L216.8 55.6 L213.6 58.2" fill="none" stroke="#f0161d" stroke-width="1.5" stroke-linejoin="round"/><path d="M215.4 40.8 C216 43 217.5 44.3 219.5 44.3 C222 44 224.3 44.8 224.5 47 C224.6 49.5 222.5 51.5 220 52.6 C218 53.4 216.5 53 214.8 54 L211 57" fill="none" stroke="#2a2a16" stroke-width="1.1"/>
<path d="M265.8 54.8 L270.3 59.3" stroke="#111" stroke-width="2.6" stroke-linecap="round"/><circle cx="260.1" cy="48.6" r="7.9" fill="#12c6e6" stroke="#161010" stroke-width="2.2"/><path d="M262 52.3 C260.6 50.3 260 49.1 260 48.1 A2 2 0 0 1 264 48.1 C264 49.1 263.4 50.3 262 52.3z" fill="#13294a"/><circle cx="262" cy="48" r=".8" fill="#9fd8ea"/>
<rect x="476.5" y="37.5" width="27" height="26" rx="3.5" fill="#d6d6d6" stroke="#bbb" stroke-width="1"/>
<path d="M482 42 V58.5 H499" fill="none" stroke="#8a8a8a" stroke-width=".9"/><path d="M482 40.8 l-1.3 2.2 h2.6z M500.3 58.5 l-2.2 -1.3 v2.6z" fill="#8a8a8a"/><path d="M483 60 h14" stroke="#aaa" stroke-width=".6" stroke-dasharray="1 1"/><path d="M484 54.5 C489 53.5 490 50 492 46.5 C494 43.5 496.5 43.5 499 43" fill="none" stroke="#c028a8" stroke-width="1.4"/><path d="M484 56.5 C488 56 490.5 53.5 492.5 52 C494.5 51 496.5 52.5 499 51.5" fill="none" stroke="#2aa6b8" stroke-width="1.2"/></svg>
<div class="abs" style="left:386px;top:7.5px;width:82.5px;height:18.5px;background:#fff;border:1px solid #c4c4c4;border-radius:3px"></div>
<div class="abs" style="left:456px;top:8.5px;width:11.5px;height:16.5px;background:linear-gradient(#fff,#f0f0f0);border-left:1px solid #d0d0d0;border-radius:0 3px 3px 0"></div>
<div class="abs" style="left:459.2px;top:11.5px;width:0;height:0;border-left:2.8px solid transparent;border-right:2.8px solid transparent;border-bottom:3.5px solid #444"></div><div class="abs" style="left:459.2px;top:18px;width:0;height:0;border-left:2.8px solid transparent;border-right:2.8px solid transparent;border-top:3.5px solid #444"></div>
<div class="t" style="left:391.5px;top:9.8px">0</div>
<div class="abs" style="left:470.5px;top:7.5px;width:82.5px;height:18.5px;background:linear-gradient(#fff,#f1f1f1);border:1px solid #c6c6c6;border-bottom-color:#aaa;border-radius:3px"></div>
<div class="t" style="left:475px;top:9.8px">px</div>
<div class="abs" style="left:540.3px;top:15px;width:0;height:0;border-left:3.5px solid transparent;border-right:3.5px solid transparent;border-top:4px solid #333"></div>
<div class="abs" style="left:276px;top:40.5px;width:78.5px;height:19px;background:linear-gradient(#fff,#f1f1f1);border:1px solid #c6c6c6;border-bottom-color:#aaa;border-radius:3px"></div>
<div class="t" style="left:280px;top:43px">Philippines</div>
<div class="abs" style="left:342px;top:47.8px;width:0;height:0;border-left:3.5px solid transparent;border-right:3.5px solid transparent;border-top:4px solid #444"></div>
<div class="abs" style="left:356.5px;top:40.5px;width:105.5px;height:19px;background:#fff;border:1px solid #c4c4c4;border-radius:2px"></div>
<div class="t" style="left:359.5px;top:43px;color:#8a8a8a">Search for...</div>
</div>
<div id="leftbar"><svg class="abs" style="left:0;top:0" width="42" height="830" viewBox="0 0 42 830"><rect x="13.5" y="71.0" width="1" height="1" fill="#c6c6c6"/>
<rect x="13.5" y="73.2" width="1" height="1" fill="#c6c6c6"/>
<rect x="15.7" y="71.0" width="1" height="1" fill="#c6c6c6"/>
<rect x="15.7" y="73.2" width="1" height="1" fill="#c6c6c6"/>
<rect x="17.9" y="71.0" width="1" height="1" fill="#c6c6c6"/>
<rect x="17.9" y="73.2" width="1" height="1" fill="#c6c6c6"/>
<rect x="20.1" y="71.0" width="1" height="1" fill="#c6c6c6"/>
<rect x="20.1" y="73.2" width="1" height="1" fill="#c6c6c6"/>
<rect x="22.3" y="71.0" width="1" height="1" fill="#c6c6c6"/>
<rect x="22.3" y="73.2" width="1" height="1" fill="#c6c6c6"/>
<rect x="24.5" y="71.0" width="1" height="1" fill="#c6c6c6"/>
<rect x="24.5" y="73.2" width="1" height="1" fill="#c6c6c6"/>
<rect x="26.700000000000003" y="71.0" width="1" height="1" fill="#c6c6c6"/>
<rect x="26.700000000000003" y="73.2" width="1" height="1" fill="#c6c6c6"/>
<rect x="40" y="66.5" width="1" height="762" fill="#dadada"/>
<path d="M6.5 82.5 L12.3 94.5 L20.5 82.8" fill="none" stroke="#222" stroke-width="1.1"/><path d="M20.5 82.8 H23" stroke="#222" stroke-width=".9"/>
<circle cx="6.3" cy="82.3" r="1.3" fill="#fff" stroke="#333" stroke-width=".7"/>
<circle cx="12.3" cy="95" r="1.3" fill="#fff" stroke="#333" stroke-width=".7"/>
<circle cx="19.5" cy="82.7" r="1.3" fill="#fff" stroke="#333" stroke-width=".7"/>
<circle cx="23.3" cy="82.5" r="1.3" fill="#fff" stroke="#333" stroke-width=".7"/>
<rect x="17" y="93.3" width="7.4" height="7.4" rx="1.3" fill="#3d8b3a" stroke="#79b576" stroke-width=".7"/><path d="M20.7 94.8 v4.4 M18.5 97.0 h4.4" stroke="#fff" stroke-width="1.5"/>
<rect x="4.3" y="108.3" width="5.6" height="5.1" fill="#1d3763"/>
<rect x="9.899999999999999" y="108.3" width="5.6" height="5.1" fill="#5f86bd"/>
<rect x="15.5" y="108.3" width="5.6" height="5.1" fill="#2b4e85"/>
<rect x="4.3" y="113.39999999999999" width="5.6" height="5.1" fill="#6a90c4"/>
<rect x="9.899999999999999" y="113.39999999999999" width="5.6" height="5.1" fill="#1f3a68"/>
<rect x="15.5" y="113.39999999999999" width="5.6" height="5.1" fill="#7fa1cf"/>
<rect x="4.3" y="118.5" width="5.6" height="5.1" fill="#1a3059"/>
<rect x="9.899999999999999" y="118.5" width="5.6" height="5.1" fill="#9ab6dc"/>
<rect x="15.5" y="118.5" width="5.6" height="5.1" fill="#4a70aa"/>
<rect x="17" y="120.3" width="7.4" height="7.4" rx="1.3" fill="#3d8b3a" stroke="#79b576" stroke-width=".7"/><path d="M20.7 121.8 v4.4 M18.5 124.0 h4.4" stroke="#fff" stroke-width="1.5"/>
<rect x="5.3" y="136.3" width="17.5" height="17.5" fill="#a9c1df" stroke="#2c4a7c" stroke-width="1"/><path d="M5.3 136.3 L14 147 L22.8 136.3 M14 136.3 V153.8 M5.3 147 H22.8 M5.3 147 L14 136.3 M9.6 147 V153.8 M18.4 147 V153.8" fill="none" stroke="#2c4a7c" stroke-width=".9"/>
<rect x="17" y="148" width="7.4" height="7.4" rx="1.3" fill="#3d8b3a" stroke="#79b576" stroke-width=".7"/><path d="M20.7 149.5 v4.4 M18.5 151.7 h4.4" stroke="#fff" stroke-width="1.5"/>
<path d="M8 167.6 A4.4 4.4 0 1 1 16.8 168.4 C16.8 172.5 13.6 176 9.6 178 L8.6 176.4 C11.5 175 13 173 13.2 171.3 A4.4 4.4 0 0 1 8 167.6z" fill="#5b8fcb" stroke="#1f4f8a" stroke-width=".9"/>
<rect x="17" y="175" width="7.4" height="7.4" rx="1.3" fill="#3d8b3a" stroke="#79b576" stroke-width=".7"/><path d="M20.7 176.5 v4.4 M18.5 178.7 h4.4" stroke="#fff" stroke-width="1.5"/>
<path d="M4.2 208.6 C5.5 203 9.5 196.5 15 192.5 C18 190.3 21 189.3 23.3 189 C23.6 192 22.5 195.5 20.5 197.5 C17 199.5 13 202.5 10 205 C8.5 205.3 7 205 6.3 205.3z" fill="#8db2de" stroke="#2d568f" stroke-width=".7"/><path d="M4.2 208.6 C8 201 14.5 194 23.2 189.2" fill="none" stroke="#13264a" stroke-width="1"/><path d="M9 200 C12 198.5 16 196 20 193" fill="none" stroke="#c5d8ef" stroke-width=".8"/>
<rect x="17" y="202" width="7.4" height="7.4" rx="1.3" fill="#3d8b3a" stroke="#79b576" stroke-width=".7"/><path d="M20.7 203.5 v4.4 M18.5 205.7 h4.4" stroke="#fff" stroke-width="1.5"/>
<rect x="5.3" y="217.3" width="17.5" height="17.5" rx="1.5" fill="#b4c9e4" stroke="#6b8cb8" stroke-width=".9"/><path d="M8 219.5 L12.3 231.5 L20 219.5" fill="none" stroke="#222" stroke-width="1.1"/>
<circle cx="7.8" cy="219.3" r="1.3" fill="#fff" stroke="#333" stroke-width=".7"/>
<circle cx="12.3" cy="232" r="1.3" fill="#fff" stroke="#333" stroke-width=".7"/>
<circle cx="20" cy="219.3" r="1.3" fill="#fff" stroke="#333" stroke-width=".7"/>
<rect x="17" y="229" width="7.4" height="7.4" rx="1.3" fill="#3d8b3a" stroke="#79b576" stroke-width=".7"/><path d="M20.7 230.5 v4.4 M18.5 232.7 h4.4" stroke="#fff" stroke-width="1.5"/>
<path d="M7 243 C10 241.5 16 241.5 18.5 243.5 C20.5 245.5 19.5 249 18.5 251 C18.5 253 20.5 254 21 254.5 C19.5 256 17 255.5 16 254 C15 256 12.5 257.5 10.5 256.5 C9.5 254 9.5 252 9.5 250 C6.5 250.5 4.5 248.5 4.8 246 C5 244.5 6 243.5 7 243z" fill="#3c6ea5" stroke="#1d3f6e" stroke-width=".8"/><path d="M11 244.5 C10.5 247.5 11 250 12 252 M15 244 C16 246.5 16 249 15.2 251" fill="none" stroke="#c7d7ea" stroke-width=".7"/>
<rect x="17" y="255.8" width="7.4" height="7.4" rx="1.3" fill="#3d8b3a" stroke="#79b576" stroke-width=".7"/><path d="M20.7 257.3 v4.4 M18.5 259.5 h4.4" stroke="#fff" stroke-width="1.5"/>
<path d="M30.2 251.9 h6 l-3 3.4z" fill="#444"/>
<circle cx="14" cy="278.8" r="8.6" fill="#d7e3f2" stroke="#6e93c4" stroke-width="1"/><ellipse cx="14" cy="278.8" rx="4" ry="8.6" fill="none" stroke="#6e93c4" stroke-width=".8"/><path d="M5.4 278.8 h17.2 M7 274 h14 M7 283.5 h14" stroke="#6e93c4" stroke-width=".8"/><path d="M9 274.5 l3 -1 l1 2.5 l-2.5 1.5z M15.5 276 l3.5 -1.5 l.5 4 l-3 .5z M11.5 280 l3 .5 l-.5 3 l-2.5 -1z" fill="#2d5d9c"/>
<rect x="17" y="283.3" width="7.4" height="7.4" rx="1.3" fill="#3d8b3a" stroke="#79b576" stroke-width=".7"/><path d="M20.7 284.8 v4.4 M18.5 287.0 h4.4" stroke="#fff" stroke-width="1.5"/>
<path d="M30.2 278.9 h6 l-3 3.4z" fill="#444"/>
<circle cx="14" cy="306" r="8.7" fill="#16305c" stroke="#0f2244" stroke-width=".8"/><path d="M6 303 h16 M5.5 306.5 h17 M6.3 310 h15.4 M8.5 300 h11" stroke="#9fbbe0" stroke-width="1.3"/><ellipse cx="14" cy="306" rx="3.6" ry="8.5" fill="none" stroke="#9fbbe0" stroke-width="1"/>
<rect x="17" y="310" width="7.4" height="7.4" rx="1.3" fill="#3d8b3a" stroke="#79b576" stroke-width=".7"/><path d="M20.7 311.5 v4.4 M18.5 313.7 h4.4" stroke="#fff" stroke-width="1.5"/>
<circle cx="14" cy="333" r="8.7" fill="#e4edf8" stroke="#6e93c4" stroke-width="1"/><ellipse cx="14" cy="333" rx="4" ry="8.7" fill="none" stroke="#8fadd4" stroke-width=".8"/><path d="M5.3 333 h17.4 M7 328.3 h14 M7 337.7 h14" stroke="#8fadd4" stroke-width=".8"/><path d="M9.5 328.5 L12.5 338 L18 328.5" fill="none" stroke="#222" stroke-width="1"/>
<circle cx="9.3" cy="328.3" r="1.1" fill="#fff" stroke="#333" stroke-width=".6"/>
<circle cx="12.5" cy="338.3" r="1.1" fill="#fff" stroke="#333" stroke-width=".6"/>
<circle cx="18" cy="328.3" r="1.1" fill="#fff" stroke="#333" stroke-width=".6"/>
<rect x="17" y="337" width="7.4" height="7.4" rx="1.3" fill="#3d8b3a" stroke="#79b576" stroke-width=".7"/><path d="M20.7 338.5 v4.4 M18.5 340.7 h4.4" stroke="#fff" stroke-width="1.5"/>
<path d="M30.2 332.9 h6 l-3 3.4z" fill="#444"/>
<path d="M4.5 360 L14 355.5 L23.5 360 V368 L14 372.5 L4.5 368z" fill="#e9c117" stroke="#b08d00" stroke-width=".7"/><path d="M4.5 360 L14 364.5 V372.5 L4.5 368z" fill="#d9ad08"/><path d="M14 364.5 L23.5 360 V368 L14 372.5z" fill="#f3d231"/><circle cx="14" cy="358.3" r="6.2" fill="#7fa3d3" stroke="#3f68a3" stroke-width=".8"/><path d="M10 356 l3 -1.5 l1.5 2.5 l-3 1.5z M15.5 357 l3 -1 l.5 3 l-2.5 .5z" fill="#23477c"/><path d="M4.5 360 L14 364.5 L23.5 360" fill="none" stroke="#b08d00" stroke-width=".7"/><path d="M4.7 360.3 C8 363 11 364.3 14 364.5 C17 364.3 20 363 23.3 360.3 L14 364.5z" fill="#e9c117"/>
<rect x="16.5" y="364" width="7.4" height="7.4" rx="1" fill="#e6b422"/><path d="M20.2 365 v5.4 M17.5 367.7 h5.4 M18.3 365.8 l3.8 3.8 M22.1 365.8 l-3.8 3.8" stroke="#fff8dc" stroke-width=".8"/>
<path d="M30.2 360.4 h6 l-3 3.4z" fill="#444"/></svg></div>
<div id="layers">
<div class="t" style="left:45px;top:68px;font-size:9.8px;color:#333">Layers</div>
<div class="abs" style="left:41.5px;top:109px;width:250.5px;height:717px;background:#fff;border:1px solid #c6c6c6"></div>
<div class="abs" style="left:42.5px;top:811.5px;width:248.5px;height:13.5px;background:#f7f7f7;border-top:1px solid #dcdcdc"></div>
<div class="abs" style="left:53px;top:811.5px;width:1px;height:13.5px;background:#d4d4d4"></div>
<div class="abs" style="left:279px;top:811.5px;width:1px;height:13.5px;background:#d4d4d4"></div>
<div class="abs" style="left:45.5px;top:815px;width:0;height:0;border-top:3.5px solid transparent;border-bottom:3.5px solid transparent;border-right:4.5px solid #3a3a3a"></div>
<div class="abs" style="left:283.5px;top:815px;width:0;height:0;border-top:3.5px solid transparent;border-bottom:3.5px solid transparent;border-left:4.5px solid #3a3a3a"></div>
<div class="abs" style="left:47.099999999999994px;top:115.60px;width:0;height:0;border-left:3.7px solid transparent;border-right:3.7px solid transparent;border-top:4.5px solid #333"></div>
<div class="cb" style="left:62.2px;top:111.80px"></div>
<svg class="abs" style="left:63.7px;top:113.10px" width="9" height="9" viewBox="0 0 9 9"><path d="M1.2 4.6 L3.3 7.4 L7.8 1" fill="none" stroke="#111" stroke-width="1.25"/></svg>
<svg class="abs" style="left:78.4px;top:110.60px" width="14" height="14" viewBox="0 0 14 14"><use href="#i-grp"/></svg>
<div class="t" style="left:97.8px;top:110.30px;color:#111;font-size:11.05px">hotosm_phl_north_populated_plac</div>
<div class="abs" style="left:42.5px;top:125.45px;width:249px;height:14.4px;background:#d5d5d5"></div>
<div class="cb" style="left:79.3px;top:127.05px"></div>
<svg class="abs" style="left:80.8px;top:128.35px" width="9" height="9" viewBox="0 0 9 9"><path d="M1.2 4.6 L3.3 7.4 L7.8 1" fill="none" stroke="#111" stroke-width="1.25"/></svg>
<div class="abs" style="left:101.8px;top:131.35px;width:3px;height:3px;border-radius:50%;background:#e4a39a"></div>
<div class="t" style="left:115.2px;top:125.55px;color:#111;font-weight:bold;text-decoration:underline;font-size:11.3px">Populated Places</div>
<div class="cb" style="left:62.2px;top:142.30px"></div>
<svg class="abs" style="left:63.7px;top:143.60px" width="9" height="9" viewBox="0 0 9 9"><path d="M1.2 4.6 L3.3 7.4 L7.8 1" fill="none" stroke="#111" stroke-width="1.25"/></svg>
<svg class="abs" style="left:78.4px;top:141.10px" width="14" height="14" viewBox="0 0 14 14"><use href="#i-grp"/></svg>
<div class="t" style="left:97.8px;top:140.80px;color:#111">BoundaryDelineation</div>
<div class="abs" style="left:47.099999999999994px;top:161.35px;width:0;height:0;border-left:3.7px solid transparent;border-right:3.7px solid transparent;border-top:4.5px solid #333"></div>
<div class="cb" style="left:62.2px;top:157.55px"></div>
<svg class="abs" style="left:78.4px;top:156.35px" width="14" height="14" viewBox="0 0 14 14"><use href="#i-grp"/></svg>
<div class="t" style="left:97.8px;top:156.05px;color:#111;font-size:11px">OSM3123_clipped</div>
<div class="cb" style="left:79.3px;top:172.80px"></div>
<svg class="abs" style="left:80.8px;top:174.10px" width="9" height="9" viewBox="0 0 9 9"><path d="M1.2 4.6 L3.3 7.4 L7.8 1" fill="none" stroke="#444" stroke-width="1.25"/></svg>
<div class="abs" style="left:96.5px;top:178.10px;width:13.5px;height:1px;background:#dfe6f7"></div>
<div class="t" style="left:115.2px;top:171.30px;color:#6e6e6e;font-weight:bold;font-style:italic;font-size:11.1px">waterways_3123</div>
<div class="cb" style="left:79.3px;top:188.05px"></div>
<div class="abs" style="left:96.5px;top:193.35px;width:13.5px;height:1px;background:#e3eeda"></div>
<div class="t" style="left:115.2px;top:186.55px;color:#6e6e6e;font-weight:bold;font-style:italic;font-size:11.1px">boundaryDelimitations</div>
<div class="cb" style="left:79.3px;top:203.30px"></div>
<div class="abs" style="left:96.5px;top:202.35px;width:13.5px;height:13.5px;background:#fff;border:1px solid #e6f0c8"></div>
<div class="t" style="left:115.2px;top:201.80px;color:#6e6e6e;font-weight:bold;font-style:italic;font-size:11.1px">boundaryExtent</div>
<div class="abs" style="left:65.8px;top:220.65px;width:0;height:0;border-top:3.7px solid transparent;border-bottom:3.7px solid transparent;border-left:4.5px solid #333"></div>
<div class="cb" style="left:79.3px;top:218.55px"></div>
<svg class="abs" style="left:96.5px;top:218.35px" width="14" height="11" viewBox="0 0 14 11"><use href="#i-poly"/></svg>
<div class="t" style="left:115.2px;top:217.05px;color:#6e6e6e;font-weight:bold;font-style:italic;font-size:11.1px">Pampanga_polygonDivider</div>
<div class="cb" style="left:79.3px;top:233.80px"></div>
<div class="abs" style="left:96.5px;top:239.10px;width:13.5px;height:1px;background:#dedede"></div>
<div class="t" style="left:115.2px;top:232.30px;color:#6e6e6e;font-weight:bold;font-style:italic;font-size:11.1px">roads_3123</div>
<div class="cb" style="left:79.3px;top:249.05px"></div>
<svg class="abs" style="left:80.8px;top:250.35px" width="9" height="9" viewBox="0 0 9 9"><path d="M1.2 4.6 L3.3 7.4 L7.8 1" fill="none" stroke="#444" stroke-width="1.25"/></svg>
<div class="abs" style="left:96.5px;top:248.10px;width:13.5px;height:13.5px;background:#fff;border:1px dotted #8a8a8a;border-bottom:1px dashed #444"></div>
<div class="t" style="left:115.2px;top:247.55px;color:#6e6e6e;font-weight:bold;font-style:italic;font-size:11.1px">pampanga3123</div>
<div class="abs" style="left:65.8px;top:266.40px;width:0;height:0;border-top:3.7px solid transparent;border-bottom:3.7px solid transparent;border-left:4.5px solid #333"></div>
<div class="cb" style="left:79.3px;top:264.30px"></div>
<svg class="abs" style="left:96.5px;top:263.35px" width="14" height="14" viewBox="0 0 14 14"><circle cx="10.5" cy="2.8" r="1" fill="none" stroke="#444" stroke-width=".6"/><circle cx="4.3" cy="5.8" r=".8" fill="#333"/><circle cx="3" cy="11" r=".9" fill="#333"/></svg>
<div class="t" style="left:115.2px;top:262.80px;color:#6e6e6e;font-weight:bold;font-style:italic;font-size:11.1px">pofw_3123</div>
<div class="cb" style="left:79.3px;top:279.55px"></div>
<div class="abs" style="left:96.5px;top:278.60px;width:13.5px;height:13.5px;background:#c5383a;border:1px solid #b02a2c"></div>
<div class="t" style="left:115.2px;top:278.05px;color:#6e6e6e;font-weight:bold;font-style:italic;font-size:11.1px">industrial_buildings_sample_</div>
<div class="cb" style="left:79.3px;top:294.80px"></div>
<div class="abs" style="left:102.3px;top:299.60px;width:2px;height:2px;border-radius:50%;background:#6b1d1d"></div>
<div class="t" style="left:115.2px;top:293.30px;color:#6e6e6e;font-weight:bold;font-style:italic;font-size:11.1px">pois_3123_cleaned</div>
<div class="abs" style="left:65.8px;top:312.15px;width:0;height:0;border-top:3.7px solid transparent;border-bottom:3.7px solid transparent;border-left:4.5px solid #333"></div>
<div class="cb" style="left:79.3px;top:310.05px"></div>
<svg class="abs" style="left:96.5px;top:309.85px" width="14" height="11" viewBox="0 0 14 11"><use href="#i-poly"/></svg>
<div class="t" style="left:115.2px;top:308.55px;color:#6e6e6e;font-weight:bold;font-style:italic;font-size:11.1px">grid_info</div>
<div class="abs" style="left:65.8px;top:327.40px;width:0;height:0;border-top:3.7px solid transparent;border-bottom:3.7px solid transparent;border-left:4.5px solid #333"></div>
<div class="cb" style="left:79.3px;top:325.30px"></div>
<svg class="abs" style="left:96.5px;top:325.10px" width="14" height="11" viewBox="0 0 14 11"><use href="#i-poly"/></svg>
<div class="t" style="left:115.2px;top:323.80px;color:#6e6e6e;font-weight:bold;font-style:italic;font-size:11.1px">landuse_a_3123</div>
<div class="cb" style="left:79.3px;top:340.55px"></div>
<div class="abs" style="left:102.5px;top:345.65px;width:1.5px;height:1.5px;border-radius:50%;background:#d4232a"></div>
<div class="t" style="left:115.2px;top:339.05px;color:#6e6e6e;font-weight:bold;font-style:italic;font-size:11.1px">VIIRS 375m</div>
<div class="cb" style="left:79.3px;top:355.80px"></div>
<div class="abs" style="left:102.5px;top:360.90px;width:1.5px;height:1.5px;border-radius:50%;background:#d4232a"></div>
<div class="t" style="left:115.2px;top:354.30px;color:#6e6e6e;font-weight:bold;font-style:italic;font-size:11.1px">MODIS C6 1km</div>
<div class="cb" style="left:79.3px;top:371.05px"></div>
<div class="abs" style="left:96.5px;top:370.10px;width:13.5px;height:13.5px;background:#f4faf1;border:1px solid #e6efe2"></div>
<div class="t" style="left:115.2px;top:369.55px;color:#6e6e6e;font-weight:bold;font-style:italic;font-size:11.1px">buildings_a_3123_cleaned</div>
<div class="abs" style="left:48.8px;top:388.40px;width:0;height:0;border-top:3.7px solid transparent;border-bottom:3.7px solid transparent;border-left:4.5px solid #333"></div>
<div class="cb" style="left:62.2px;top:386.30px"></div>
<svg class="abs" style="left:79.4px;top:386.10px" width="12" height="12" viewBox="0 0 12 12"><use href="#i-raster"/></svg>
<div class="t" style="left:97.8px;top:384.80px;color:#6e6e6e;font-weight:bold;font-style:italic;font-size:11.1px">OpenStreetMap</div>
<svg class="abs" style="left:62.5px;top:400.85px" width="13" height="13" viewBox="0 0 13 13"><use href="#i-table"/></svg>
<div class="t" style="left:81px;top:400.05px;color:#111;font-weight:bold;font-size:11.3px">green_spaces_gridded</div>
<svg class="abs" style="left:62.5px;top:416.10px" width="13" height="13" viewBox="0 0 13 13"><use href="#i-table"/></svg>
<div class="t" style="left:81px;top:415.30px;color:#111;font-weight:bold;font-size:11.3px">builtup_spaces_gridded</div>
<div class="cb" style="left:62.2px;top:432.05px"></div>
<div class="abs" style="left:79.4px;top:431.10px;width:13.5px;height:13.5px;background:#6f9b6c;border:1px solid #66905f"></div>
<div class="t" style="left:97.8px;top:430.55px;color:#6e6e6e;font-weight:bold;font-style:italic;font-size:11.1px">green_spaces_gridded</div>
<div class="cb" style="left:62.2px;top:447.30px"></div>
<div class="abs" style="left:79.4px;top:446.35px;width:13.5px;height:13.5px;background:#f4a4b2;border:1px solid #ee9aa9"></div>
<div class="t" style="left:97.8px;top:445.80px;color:#6e6e6e;font-weight:bold;font-style:italic;font-size:11.1px">builtup_spaces_gridded</div>
<div class="abs" style="left:48.8px;top:464.65px;width:0;height:0;border-top:3.7px solid transparent;border-bottom:3.7px solid transparent;border-left:4.5px solid #333"></div>
<div class="cb" style="left:62.2px;top:462.55px"></div>
<svg class="abs" style="left:79.4px;top:462.35px" width="14" height="11" viewBox="0 0 14 11"><use href="#i-poly"/></svg>
<div class="t" style="left:97.8px;top:461.05px;color:#6e6e6e;font-weight:bold;font-style:italic;font-size:11.1px">grid10km</div>
<div class="abs" style="left:48.8px;top:479.90px;width:0;height:0;border-top:3.7px solid transparent;border-bottom:3.7px solid transparent;border-left:4.5px solid #333"></div>
<div class="cb" style="left:62.2px;top:477.80px"></div>
<svg class="abs" style="left:79.4px;top:477.60px" width="14" height="11" viewBox="0 0 14 11"><use href="#i-poly"/></svg>
<div class="t" style="left:97.8px;top:476.30px;color:#6e6e6e;font-weight:bold;font-style:italic;font-size:11.1px">line_lengths_gridded</div>
<div class="cb" style="left:62.2px;top:493.05px"></div>
<div class="abs" style="left:79.4px;top:492.10px;width:13.5px;height:13.5px;background:#fff;border:1px solid #ddd;border-bottom-color:#333"></div>
<div class="t" style="left:97.8px;top:491.55px;color:#6e6e6e;font-weight:bold;font-style:italic;font-size:11.1px">grid10km copy</div>
<div class="abs" style="left:48.8px;top:510.40px;width:0;height:0;border-top:3.7px solid transparent;border-bottom:3.7px solid transparent;border-left:4.5px solid #333"></div>
<div class="cb" style="left:62.2px;top:508.30px"></div>
<svg class="abs" style="left:79.4px;top:508.10px" width="14" height="11" viewBox="0 0 14 11"><use href="#i-poly"/></svg>
<div class="t" style="left:97.8px;top:506.80px;color:#6e6e6e;font-weight:bold;font-style:italic;font-size:11.1px">landuse_3123_clipped</div>
<svg class="abs" style="left:0;top:86px" width="240" height="20" viewBox="0 86 240 20"><path d="M49 97.5 L52 93.5 L56.5 96 L55.5 100.5z" fill="#e0262d"/><path d="M50.5 95.3 L52.5 92.5 L57.5 94.5 L56.3 97z" fill="#3b6fc0"/><path d="M51.5 93.5 L53 91.5 L58.2 93.3 L57 95.2z" fill="#f4d21f"/><path d="M55.3 95 L58.3 96.3 L57 100.3 L54 99z" fill="#d9a066" stroke="#a56a2c" stroke-width=".4"/><path d="M57.3 96 L60.8 92" stroke="#d98a1f" stroke-width="1.6" stroke-linecap="round"/>
<path d="M70.3 95.5 h3 v6.5 h-3z" fill="#f4f4f4" stroke="#9a9a9a" stroke-width=".8"/><path d="M72.8 92.5 h7 v9.5 h-7z" fill="#fafafa" stroke="#8a8a8a" stroke-width=".8"/><path d="M75.3 89.8 h3 v3.4 h-3z" fill="#eee" stroke="#7e95b5" stroke-width=".8"/><path d="M76.2 93.5 v5.5 M78 93.5 v5.5" stroke="#8aa6c8" stroke-width=".9"/><path d="M79.8 91.5 h1.6 v7" fill="none" stroke="#9a9a9a" stroke-width=".8"/><rect x="77.3" y="97.5" width="5" height="5" rx=".8" fill="#4e9a4a"/><path d="M79.8 98.4 v3.2 M78.2 100 h3.2" stroke="#fff" stroke-width="1.1"/>
<path d="M91.5 96.5 C94.5 92 100.5 91.5 104 96 C100.5 100 94.5 100 91.5 96.5z" fill="#f6f6f6" stroke="#9a9a9a" stroke-width=".8"/><path d="M92 93.5 C95.5 90.5 100 90.3 103.5 92.5" fill="none" stroke="#b8b8b8" stroke-width=".7"/><circle cx="97.5" cy="95.8" r="2.7" fill="#5c86c0"/><circle cx="97.5" cy="95.8" r="1.1" fill="#26466f"/><path d="M101.5 100.5 h4 l-2 2.4z" fill="#444"/>
<path d="M113.2 89.3 H124.6 V91.2 H113.2z" fill="#efd637" stroke="#c7ad12" stroke-width=".4"/><path d="M113.4 91.2 H124.4 L120 96.5 V101.8 L117.8 100.8 V96.5z" fill="#4f86c4" stroke="#3568a5" stroke-width=".5"/>
<text x="134" y="98.3" font-family="Liberation Serif,serif" font-size="18.5" fill="#5b2a7a">ε</text><path d="M141 96.8 H147 L145 99 V102 L143 101.5 V99z" fill="#c9c9c9" stroke="#9c9c9c" stroke-width=".5"/><path d="M151.8 94.5 h6 l-3 3.4z" fill="#444"/>
<path d="M166.3 91 V101 M166.3 91 h3" fill="none" stroke="#aaa" stroke-width=".7"/><rect x="168.6" y="93.3" width="2.4" height="2.4" fill="#f39a1f"/><rect x="168.6" y="98.2" width="2.4" height="2.4" fill="#f39a1f"/><path d="M172.8 90.3 h3.4 v5.2 h2.4 l-4.1 5.3 l-4.1 -5.3 h2.4z" fill="#4a80bf" stroke="#2c5b96" stroke-width=".5"/>
<path d="M187.8 91 V101 M187.8 91 h3" fill="none" stroke="#aaa" stroke-width=".7"/><rect x="190" y="93.3" width="2.4" height="2.4" fill="#f39a1f"/><rect x="190" y="98.2" width="2.4" height="2.4" fill="#f39a1f"/><path d="M194.2 100.8 h3.4 v-5.2 h2.4 l-4.1 -5.3 l-4.1 5.3 h2.4z" fill="#4a80bf" stroke="#2c5b96" stroke-width=".5"/>
<rect x="208.3" y="90.3" width="9.3" height="9" fill="#fdfdfd" stroke="#8a8a8a" stroke-width=".8"/><circle cx="217.3" cy="99.6" r="2.7" fill="#e3202c"/><path d="M215.6 99.6 h3.4" stroke="#fff" stroke-width="1.2"/></svg>
</div>
<div id="back">
<div class="abs" style="left:297.5px;top:100px;width:356.5px;height:725.5px;background:#fff;border:1px solid #d5d5d5"></div>
<svg class="abs" style="left:298px;top:745px" width="356" height="80" viewBox="298 745 356 80"><circle cx="404.4" cy="752.6" r="3.4" fill="#2a1418" stroke="#111" stroke-width=".6"/><circle cx="427.3" cy="749.6" r="3" fill="#2a1418" stroke="#111" stroke-width=".6"/><circle cx="438.3" cy="757.5" r="2.1" fill="#e99aa9" stroke="#4a2f33" stroke-width=".75"/><circle cx="424.7" cy="760" r="2.1" fill="#e99aa9" stroke="#4a2f33" stroke-width=".75"/><circle cx="423.6" cy="765.4" r="2.1" fill="#e99aa9" stroke="#4a2f33" stroke-width=".75"/><circle cx="426.5" cy="764.5" r="2.1" fill="#e99aa9" stroke="#4a2f33" stroke-width=".75"/><circle cx="437.9" cy="772.5" r="2.3" fill="#b07780" stroke="#2a1a1c" stroke-width="1"/><circle cx="436.6" cy="766.7" r="2.1" fill="#e99aa9" stroke="#4a2f33" stroke-width=".75"/><circle cx="436.6" cy="770.4" r="2.1" fill="#e99aa9" stroke="#4a2f33" stroke-width=".75"/><circle cx="419.5" cy="775.3" r="2.1" fill="#e99aa9" stroke="#4a2f33" stroke-width=".75"/><circle cx="428.1" cy="774.1" r="2.1" fill="#e99aa9" stroke="#4a2f33" stroke-width=".75"/><circle cx="430.5" cy="778.9" r="2.1" fill="#e99aa9" stroke="#4a2f33" stroke-width=".75"/><circle cx="435" cy="776.8" r="2.1" fill="#e99aa9" stroke="#4a2f33" stroke-width=".75"/><circle cx="432.3" cy="775.4" r="2.1" fill="#e99aa9" stroke="#4a2f33" stroke-width=".75"/><circle cx="427" cy="777.1" r="2.1" fill="#e99aa9" stroke="#4a2f33" stroke-width=".75"/><circle cx="432.3" cy="777.3" r="2.1" fill="#e99aa9" stroke="#4a2f33" stroke-width=".75"/></svg>
<div class="abs" style="left:661.5px;top:700px;width:32px;height:123px;background:#555"></div>
<svg class="abs" style="left:1577px;top:70px" width="23" height="10" viewBox="0 0 23 10"><rect x=".9" y=".9" width="8.4" height="8.4" rx="1.6" fill="#f4f4f4" stroke="#555" stroke-width=".9"/><rect x="3" y="4" width="3.6" height="3.4" fill="none" stroke="#555" stroke-width=".8"/><path d="M4.4 4 v-1.4 h3.2 v3 h-1" fill="none" stroke="#555" stroke-width=".8"/><rect x="13.3" y=".9" width="8.4" height="8.4" rx="1.6" fill="#f4f4f4" stroke="#555" stroke-width=".9"/><path d="M15.2 2.8 l4.6 4.6 M19.8 2.8 l-4.6 4.6" stroke="#333" stroke-width="1.2"/></svg>
<div class="abs" style="left:900px;top:86px;width:697.5px;height:19.5px;background:linear-gradient(#fff,#f1f1f1);border:1px solid #c6c6c6;border-bottom-color:#aaa;border-radius:3px"></div>
<div class="abs" style="left:1584.9px;top:93.5px;width:0;height:0;border-left:3.5px solid transparent;border-right:3.5px solid transparent;border-top:4px solid #333"></div>
<div class="abs" style="left:900px;top:128px;width:690.5px;height:141px;background:#e7e7e7;border:1px solid #dadada;border-radius:2px"></div>
<div class="abs" style="left:900px;top:137px;width:680.5px;height:20.5px;background:linear-gradient(#fff,#f1f1f1);border:1px solid #c6c6c6;border-bottom-color:#aaa;border-radius:3px"></div>
<div class="abs" style="left:1567.5px;top:145.0px;width:0;height:0;border-left:3.5px solid transparent;border-right:3.5px solid transparent;border-top:4px solid #333"></div>
<div class="abs" style="left:900px;top:213.4px;width:655px;height:20px;background:#fff;border:1px solid #c4c4c4;border-bottom-color:#aaa;border-radius:3px"></div>
<div class="abs" style="left:1537px;top:214.4px;width:17px;height:18px;background:linear-gradient(#fff,#f0f0f0);border-left:1px solid #d0d0d0;border-radius:0 3px 3px 0"></div>
<div class="abs" style="left:1542.0px;top:221.4px;width:0;height:0;border-left:3.5px solid transparent;border-right:3.5px solid transparent;border-top:4px solid #333"></div>
<div class="btn" style="left:1560.1px;top:213.4px;width:20.2px;height:20px;font-family:'Liberation Serif',serif;font-size:19px;line-height:14px;color:#5b2a7a">ε</div>
<div class="abs" style="left:900px;top:238.9px;width:655px;height:20px;background:#fff;border:1px solid #c4c4c4;border-bottom-color:#aaa;border-radius:3px"></div>
<div class="abs" style="left:1537px;top:239.9px;width:17px;height:18px;background:linear-gradient(#fff,#f0f0f0);border-left:1px solid #d0d0d0;border-radius:0 3px 3px 0"></div>
<div class="abs" style="left:1542.0px;top:246.9px;width:0;height:0;border-left:3.5px solid transparent;border-right:3.5px solid transparent;border-top:4px solid #333"></div>
<div class="btn" style="left:1560.1px;top:238.9px;width:20.2px;height:20px;font-family:'Liberation Serif',serif;font-size:19px;line-height:14px;color:#5b2a7a">ε</div>
<div class="abs" style="left:900px;top:292px;width:690.5px;height:97px;background:#e7e7e7;border:1px solid #dadada;border-radius:2px"></div>
<div class="abs" style="left:1200px;top:301px;width:159.5px;height:23.4px;background:linear-gradient(#fff,#f1f1f1);border:1px solid #c6c6c6;border-bottom-color:#aaa;border-radius:3px"></div>
<div class="abs" style="left:1200px;top:305.8px;width:155.5px;height:13.4px;background:linear-gradient(#9fc5e2,#86b6d9);border-radius:2px"></div>
<div class="abs" style="left:1360px;top:301px;width:9.5px;height:23.4px;background:linear-gradient(#fff,#f1f1f1);border:1px solid #c6c6c6;border-bottom-color:#aaa;border-radius:2px"></div>
<div class="abs" style="left:1361.7px;top:310.95px;width:0;height:0;border-left:3px solid transparent;border-right:3px solid transparent;border-top:3.5px solid #333"></div>
<svg class="abs" style="left:1377.6px;top:305.2px" width="22" height="15" viewBox="0 0 22 15"><use href="#i-dd"/></svg>
<div class="abs" style="left:1200px;top:329.8px;width:159.5px;height:23px;background:linear-gradient(#fff,#f1f1f1);border:1px solid #c6c6c6;border-bottom-color:#aaa;border-radius:3px"></div>
<div class="abs" style="left:1200px;top:334.6px;width:155.5px;height:13.4px;background:linear-gradient(#2a80bd,#1a6fae);border-radius:2px"></div>
<div class="abs" style="left:1360px;top:329.8px;width:9.5px;height:23px;background:linear-gradient(#fff,#f1f1f1);border:1px solid #c6c6c6;border-bottom-color:#aaa;border-radius:2px"></div>
<div class="abs" style="left:1361.7px;top:339.55px;width:0;height:0;border-left:3px solid transparent;border-right:3px solid transparent;border-top:3.5px solid #333"></div>
<svg class="abs" style="left:1377.6px;top:334.0px" width="22" height="15" viewBox="0 0 22 15"><use href="#i-dd"/></svg>
<div class="t" style="left:1406px;top:335px">Stroke width</div>
<div class="abs" style="left:1474.5px;top:332px;width:75px;height:19px;background:#fff;border:1px solid #c4c4c4;border-radius:3px"></div>
<div class="abs" style="left:1537px;top:333px;width:11.5px;height:17px;background:linear-gradient(#fff,#f0f0f0);border-left:1px solid #d0d0d0;border-radius:0 3px 3px 0"></div>
<div class="abs" style="left:1540.4px;top:336.5px;width:0;height:0;border-left:2.8px solid transparent;border-right:2.8px solid transparent;border-bottom:3.5px solid #444"></div><div class="abs" style="left:1540.4px;top:343.0px;width:0;height:0;border-left:2.8px solid transparent;border-right:2.8px solid transparent;border-top:3.5px solid #444"></div>
<div class="t" style="left:1479.5px;top:335px">1,00</div>
<svg class="abs" style="left:1516.5px;top:337px" width="12" height="9" viewBox="0 0 12 9"><path d="M0 4.5 L3.6 .5 H11 a.8 .8 0 0 1 .8 .8 V7.7 a.8 .8 0 0 1 -.8 .8 H3.6z" fill="#8b8b8b"/><path d="M5.4 2.6 l3.6 3.8 M9 2.6 l-3.6 3.8" stroke="#fff" stroke-width="1.1"/></svg>
<svg class="abs" style="left:1557.6px;top:334.3px" width="22" height="15" viewBox="0 0 22 15"><use href="#i-dd"/></svg>
<div class="abs" style="left:1200px;top:366.8px;width:283px;height:2.8px;background:#4b8fe0;border-radius:1.4px;box-shadow:0 0 0 .4px #4585d6"></div>
<div class="abs" style="left:1481.2px;top:363.2px;width:11.2px;height:10.5px;background:linear-gradient(#fff,#f3f3f3);border:1px solid #bdbdbd;border-radius:2.5px"></div>
<div class="abs" style="left:1496px;top:359.5px;width:84.5px;height:18.5px;background:#fff;border:1px solid #c4c4c4;border-radius:3px"></div>
<div class="abs" style="left:1567.5px;top:360.5px;width:12px;height:16.5px;background:linear-gradient(#fff,#f0f0f0);border-left:1px solid #d0d0d0;border-radius:0 3px 3px 0"></div>
<div class="abs" style="left:1571.0px;top:363.7px;width:0;height:0;border-left:2.8px solid transparent;border-right:2.8px solid transparent;border-bottom:3.5px solid #444"></div><div class="abs" style="left:1571.0px;top:370.2px;width:0;height:0;border-left:2.8px solid transparent;border-right:2.8px solid transparent;border-top:3.5px solid #444"></div>
<div class="t" style="left:1500px;top:362px">100,0 %</div>
<div class="t" style="left:698.8px;top:764.5px">Type of plot</div>
<div class="abs" style="left:927.5px;top:761.2px;width:670px;height:19.8px;background:linear-gradient(#fff,#f1f1f1);border:1px solid #c6c6c6;border-bottom-color:#aaa;border-radius:3px"></div>
<div class="t" style="left:932px;top:764.5px">Single Plot</div>
<div class="abs" style="left:1584.9px;top:769.0px;width:0;height:0;border-left:3.5px solid transparent;border-right:3.5px solid transparent;border-top:4px solid #333"></div>
<div class="btn" style="left:698.5px;top:803.2px;width:116px;height:20.8px"></div>
<div class="t" style="left:716.5px;top:807px">Clean Plot Canvas</div>
<svg class="abs" style="left:701px;top:805px" width="15" height="17" viewBox="0 0 15 17"><use href="#i-broom"/></svg>
<div class="btn" style="left:1334.5px;top:803.2px;width:85.5px;height:20.8px"></div>
<div class="t" style="left:1353.5px;top:807px">Update Plot</div>
<svg class="abs" style="left:1337px;top:806px" width="15" height="15" viewBox="0 0 15 15"><use href="#i-refresh"/></svg>
<div class="btn" style="left:1424.7px;top:803.2px;width:82px;height:20.8px"></div>
<div class="t" style="left:1444px;top:807px">Create Plot</div>
<svg class="abs" style="left:1427px;top:806px" width="15" height="15" viewBox="0 0 15 15"><use href="#i-go"/></svg>
<div class="btn" style="left:1511.8px;top:803.2px;width:86.2px;height:20.8px"></div>
<div class="t" style="left:1516px;top:807px">Configuration</div>
<div class="abs" style="left:1589.2px;top:812.3px;width:0;height:0;border-left:2.4px solid transparent;border-right:2.4px solid transparent;border-top:2.8px solid #666"></div>
</div>
<div id="status">
<div class="abs" style="left:1.5px;top:829.5px;width:179px;height:19.5px;background:#fff;border:1px solid #c4c4c4;border-radius:3px"></div>
<svg class="abs" style="left:8px;top:832px" width="13" height="13" viewBox="0 0 13 13"><circle cx="5" cy="5" r="3.6" fill="none" stroke="#777" stroke-width="1"/><path d="M7.8 7.8 L11.3 11.3" stroke="#777" stroke-width="1.2" stroke-linecap="round"/></svg>
<div class="t" style="left:26px;top:832.5px;color:#7a7a7a">Type to locate (⌘K)</div>
<div class="t" style="left:857px;top:832.6px;font-size:9.7px">Coordinate</div>
<div class="abs" style="left:909.5px;top:830px;width:90px;height:18.5px;background:#fff;border:1px solid #c4c4c4;border-radius:2px"></div>
<div class="t" style="left:916px;top:832.6px;font-size:10px">353750,1684644</div>
<svg class="abs" style="left:1003px;top:831px" width="15" height="16" viewBox="0 0 15 16"><use href="#i-extent"/></svg>
<div class="t" style="left:1028px;top:832.6px;font-size:9.3px">Scale</div>
<div class="abs" style="left:1055px;top:830px;width:79px;height:18.5px;background:#fff;border:1px solid #c4c4c4;border-radius:3px"></div>
<div class="abs" style="left:1116px;top:831px;width:17px;height:16.5px;background:linear-gradient(#fff,#f0f0f0);border-left:1px solid #d0d0d0;border-radius:0 3px 3px 0"></div>
<div class="t" style="left:1058.5px;top:832.6px;font-size:9.6px">1:3610237</div>
<div class="abs" style="left:1121.3px;top:837.5px;width:0;height:0;border-left:3.5px solid transparent;border-right:3.5px solid transparent;border-top:4px solid #333"></div>
<svg class="abs" style="left:1144px;top:832px" width="11" height="14" viewBox="0 0 11 14"><path d="M2.8 6 V4 a2.7 2.7 0 0 1 5.4 0 V6" fill="none" stroke="#7a7a7a" stroke-width="1.3"/><rect x="1" y="6" width="9" height="7" rx="1" fill="#6f6f6f"/></svg>
<div class="t" style="left:1162.5px;top:832.6px;font-size:10px">Magnifier</div>
<div class="abs" style="left:1207px;top:830px;width:75px;height:18.5px;background:#fff;border:1px solid #c4c4c4;border-radius:3px"></div>
<div class="abs" style="left:1269px;top:831px;width:12px;height:16.5px;background:linear-gradient(#fff,#f0f0f0);border-left:1px solid #d0d0d0;border-radius:0 3px 3px 0"></div>
<div class="t" style="left:1211px;top:832.6px;font-size:10px">100%</div>
<div class="t" style="left:1289.7px;top:832.6px;font-size:9.6px">Rotation</div>
<div class="abs" style="left:1334.5px;top:830px;width:76.5px;height:18.5px;background:#fff;border:1px solid #c4c4c4;border-radius:3px"></div>
<div class="abs" style="left:1398px;top:831px;width:12px;height:16.5px;background:linear-gradient(#fff,#f0f0f0);border-left:1px solid #d0d0d0;border-radius:0 3px 3px 0"></div>
<div class="t" style="left:1338.5px;top:832.6px;font-size:9.5px">0,0 °</div>
<div class="abs" style="left:1272.4px;top:834px;width:0;height:0;border-left:2.8px solid transparent;border-right:2.8px solid transparent;border-bottom:3.5px solid #444"></div><div class="abs" style="left:1272.4px;top:840.5px;width:0;height:0;border-left:2.8px solid transparent;border-right:2.8px solid transparent;border-top:3.5px solid #444"></div>
<div class="abs" style="left:1401.4px;top:834px;width:0;height:0;border-left:2.8px solid transparent;border-right:2.8px solid transparent;border-bottom:3.5px solid #444"></div><div class="abs" style="left:1401.4px;top:840.5px;width:0;height:0;border-left:2.8px solid transparent;border-right:2.8px solid transparent;border-top:3.5px solid #444"></div>
<div class="cb" style="left:1418px;top:833.5px"></div>
<svg class="abs" style="left:1419.5px;top:834.8px" width="9" height="9" viewBox="0 0 9 9"><path d="M1.2 4.6 L3.3 7.4 L7.8 1" fill="none" stroke="#111" stroke-width="1.25"/></svg>
<div class="t" style="left:1433px;top:832.6px;font-size:9.3px">Render</div>
<svg class="abs" style="left:1478.5px;top:833px" width="13" height="13" viewBox="0 0 13 13"><use href="#i-crs"/></svg>
<div class="t" style="left:1492.5px;top:832.6px;font-size:9.3px">EPSG:3123</div>
<svg class="abs" style="left:1561px;top:832px" width="16" height="15" viewBox="0 0 16 15"><use href="#i-msg"/></svg>
</div>
<div id="dlg">
<div id="dlgtitle"></div>
<div class="abs" style="left:6.5px;top:4.5px;width:11px;height:11px;border-radius:50%;background:#8e8e91;border:0.5px solid #7d7d80"></div>
<div class="abs" style="left:23.5px;top:4.5px;width:11px;height:11px;border-radius:50%;background:#dcdcdc;border:0.5px solid #c6c6c6"></div>
<div class="abs" style="left:40.5px;top:4.5px;width:11px;height:11px;border-radius:50%;background:#8e8e91;border:0.5px solid #7d7d80"></div>
<div class="t" style="left:0;width:1038px;text-align:center;top:3px;color:#3c3c3c">Expression Dialog</div>
<div class="abs" style="left:3px;top:43.5px;width:1032px;height:1px;background:#d0d0d0"></div>
<div class="abs" style="left:79px;top:24px;width:98px;height:21px;background:linear-gradient(#ebebeb,#e4e4e4);border:1px solid #cfcfcf;border-bottom:1px solid #d2d2d2;border-radius:3px 3px 0 0"></div>
<div class="t" style="left:89px;top:28px">Function Editor</div>
<div class="abs" style="left:3px;top:22.4px;width:77px;height:22.6px;background:linear-gradient(#ffffff,#f3f3f3 70%,#ececec);border:1px solid #cbcbcb;border-bottom:none;border-radius:3px 3px 0 0"></div>
<div class="t" style="left:13px;top:27px">Expression</div>
<div class="btn" id="ib0" style="left:10.30px;top:53.1px;width:20.2px;height:19.7px"></div>
<div class="btn" id="ib1" style="left:32.38px;top:53.1px;width:20.2px;height:19.7px"></div>
<div class="btn" id="ib2" style="left:54.46px;top:53.1px;width:20.2px;height:19.7px"></div>
<div class="btn" id="ib3" style="left:76.54px;top:53.1px;width:20.2px;height:19.7px"></div>
<div class="btn" id="ib4" style="left:98.62px;top:53.1px;width:20.2px;height:19.7px"></div>
<div class="btn" id="ib5" style="left:120.70px;top:53.1px;width:20.2px;height:19.7px"></div>
<div class="field" style="left:10px;top:78px;width:360px;height:499px"></div>
<div class="abs" style="left:11px;top:79px;width:357px;height:13px;background:#ededed"></div>
<div class="t" style="left:19.5px;top:78.5px;font-family:'Liberation Mono',monospace;font-size:11.25px;color:#8959a8"><span style="color:#718c00">"population"</span> is not null</div>
<div class="btn" style="left:10.0px;top:582.3px;width:24.8px;height:20.2px;line-height:18.5px">=</div>
<div class="btn" style="left:36.5px;top:582.3px;width:23.3px;height:20.2px;line-height:18.5px">+</div>
<div class="btn" style="left:62.3px;top:582.3px;width:23.1px;height:20.2px;line-height:18.5px">-</div>
<div class="btn" style="left:87.6px;top:582.3px;width:23.1px;height:20.2px;line-height:18.5px">/</div>
<div class="btn" style="left:113.2px;top:582.3px;width:23.1px;height:20.2px;line-height:18.5px">*</div>
<div class="btn" style="left:138.5px;top:582.3px;width:24.2px;height:20.2px;line-height:18.5px">^</div>
<div class="btn" style="left:164.9px;top:582.3px;width:23.1px;height:20.2px;line-height:18.5px">||</div>
<div class="btn" style="left:190.2px;top:582.3px;width:23.4px;height:20.2px;line-height:18.5px">(</div>
<div class="btn" style="left:215.5px;top:582.3px;width:23.4px;height:20.2px;line-height:18.5px">)</div>
<div class="btn" style="left:241.0px;top:582.3px;width:23.7px;height:20.2px;line-height:18.5px">'\n'</div>
<div class="t" style="left:10.5px;top:614px">Feature</div>
<div class="field" style="left:54px;top:610px;width:265px;height:21px;border-radius:3px"></div>
<div class="abs" style="left:301px;top:611px;width:17px;height:19px;border-left:1px solid #d0d0d0;background:linear-gradient(#fff,#f2f2f2);border-radius:0 3px 3px 0"></div>
<div class="abs" style="left:305px;top:618.5px;width:0;height:0;border-left:3.5px solid transparent;border-right:3.5px solid transparent;border-top:4px solid #444"></div>
<div class="btn" style="left:324px;top:610px;width:20px;height:20px"></div>
<div class="abs" style="left:329px;top:614.5px;width:0;height:0;border-top:5.5px solid transparent;border-bottom:5.5px solid transparent;border-right:9px solid #d3d3d3"></div>
<div class="btn" style="left:349px;top:610px;width:21px;height:20px"></div>
<div class="abs" style="left:355px;top:614.5px;width:0;height:0;border-top:5.5px solid transparent;border-bottom:5.5px solid transparent;border-left:9px solid #3d7fc4"></div>
<div class="t" style="left:10.5px;top:636px">Preview:&nbsp; 0</div>
<div class="btn" style="left:3.2px;top:662.3px;width:67.2px;height:19.6px;line-height:19px">Help</div>
<div class="btn" style="left:894.9px;top:662.3px;width:67.5px;height:19.6px;line-height:19px">Cancel</div>
<div class="btn" style="left:967.7px;top:662.3px;width:67.3px;height:19.6px;line-height:19px;background:linear-gradient(#fdfdfd,#e6e9ee);border-color:#8cb5ea;box-shadow:0 0 0 .6px #a8c8f0">OK</div>
<div class="field" style="left:389px;top:53px;width:234px;height:21px;border-radius:3px"></div>
<svg class="abs" style="left:394px;top:57px" width="13" height="13" viewBox="0 0 13 13"><circle cx="5.4" cy="5.4" r="3.4" fill="none" stroke="#8a8a8a" stroke-width="1"/><path d="M8 8 L11.3 11.3" stroke="#8a8a8a" stroke-width="1.1" stroke-linecap="round"/></svg>
<div class="t" style="left:413px;top:57px;color:#858585">Search...</div>
<div class="btn" style="left:628px;top:53px;width:68px;height:21px;line-height:20px;color:#a9a9a9;background:linear-gradient(#f6f6f6,#f0f0f0);border-color:#cfcfcf">Show Help</div>
<div class="field" style="left:388.5px;top:78.3px;width:307.2px;height:570.5px"></div>
<div class="abs" style="left:406px;top:79.6px;width:289.2px;height:284.6px;background:#c3c3c3"></div>
<div class="abs" style="left:396px;top:82.80px;width:0;height:0;border-top:3.5px solid transparent;border-bottom:3.5px solid transparent;border-left:4.5px solid #4a4a4a"></div>
<div class="t" style="left:409px;top:79.00px;color:#111">Aggregates</div>
<div class="abs" style="left:396px;top:96.36px;width:0;height:0;border-top:3.5px solid transparent;border-bottom:3.5px solid transparent;border-left:4.5px solid #4a4a4a"></div>
<div class="t" style="left:409px;top:92.56px;color:#111">Arrays</div>
<div class="abs" style="left:396px;top:109.92px;width:0;height:0;border-top:3.5px solid transparent;border-bottom:3.5px solid transparent;border-left:4.5px solid #4a4a4a"></div>
<div class="t" style="left:409px;top:106.12px;color:#111">Color</div>
<div class="abs" style="left:396px;top:123.48px;width:0;height:0;border-top:3.5px solid transparent;border-bottom:3.5px solid transparent;border-left:4.5px solid #4a4a4a"></div>
<div class="t" style="left:409px;top:119.68px;color:#111">Conditionals</div>
<div class="abs" style="left:396px;top:137.04px;width:0;height:0;border-top:3.5px solid transparent;border-bottom:3.5px solid transparent;border-left:4.5px solid #4a4a4a"></div>
<div class="t" style="left:409px;top:133.24px;color:#111">Conversions</div>
<div class="abs" style="left:396px;top:150.60px;width:0;height:0;border-top:3.5px solid transparent;border-bottom:3.5px solid transparent;border-left:4.5px solid #4a4a4a"></div>
<div class="t" style="left:409px;top:146.80px;color:#111">Date and Time</div>
<div class="abs" style="left:396px;top:164.16px;width:0;height:0;border-top:3.5px solid transparent;border-bottom:3.5px solid transparent;border-left:4.5px solid #4a4a4a"></div>
<div class="t" style="left:409px;top:160.36px;color:#111">Fields and Values</div>
<div class="abs" style="left:396px;top:177.72px;width:0;height:0;border-top:3.5px solid transparent;border-bottom:3.5px solid transparent;border-left:4.5px solid #4a4a4a"></div>
<div class="t" style="left:409px;top:173.92px;color:#111">Files and Paths</div>
<div class="abs" style="left:396px;top:191.28px;width:0;height:0;border-top:3.5px solid transparent;border-bottom:3.5px solid transparent;border-left:4.5px solid #4a4a4a"></div>
<div class="t" style="left:409px;top:187.48px;color:#111">Fuzzy Matching</div>
<div class="abs" style="left:396px;top:204.84px;width:0;height:0;border-top:3.5px solid transparent;border-bottom:3.5px solid transparent;border-left:4.5px solid #4a4a4a"></div>
<div class="t" style="left:409px;top:201.04px;color:#111">General</div>
<div class="abs" style="left:396px;top:218.40px;width:0;height:0;border-top:3.5px solid transparent;border-bottom:3.5px solid transparent;border-left:4.5px solid #4a4a4a"></div>
<div class="t" style="left:409px;top:214.60px;color:#111">Geometry</div>
<div class="abs" style="left:396px;top:231.96px;width:0;height:0;border-top:3.5px solid transparent;border-bottom:3.5px solid transparent;border-left:4.5px solid #4a4a4a"></div>
<div class="t" style="left:409px;top:228.16px;color:#111">Map Layers</div>
<div class="abs" style="left:396px;top:245.52px;width:0;height:0;border-top:3.5px solid transparent;border-bottom:3.5px solid transparent;border-left:4.5px solid #4a4a4a"></div>
<div class="t" style="left:409px;top:241.72px;color:#111">Maps</div>
<div class="abs" style="left:396px;top:259.08px;width:0;height:0;border-top:3.5px solid transparent;border-bottom:3.5px solid transparent;border-left:4.5px solid #4a4a4a"></div>
<div class="t" style="left:409px;top:255.28px;color:#111">Math</div>
<div class="abs" style="left:396px;top:272.64px;width:0;height:0;border-top:3.5px solid transparent;border-bottom:3.5px solid transparent;border-left:4.5px solid #4a4a4a"></div>
<div class="t" style="left:409px;top:268.84px;color:#111">Operators</div>
<div class="abs" style="left:396px;top:286.20px;width:0;height:0;border-top:3.5px solid transparent;border-bottom:3.5px solid transparent;border-left:4.5px solid #4a4a4a"></div>
<div class="t" style="left:409px;top:282.40px;color:#111">Rasters</div>
<div class="abs" style="left:396px;top:299.76px;width:0;height:0;border-top:3.5px solid transparent;border-bottom:3.5px solid transparent;border-left:4.5px solid #4a4a4a"></div>
<div class="t" style="left:409px;top:295.96px;color:#111">Record and Attributes</div>
<div class="abs" style="left:396px;top:313.32px;width:0;height:0;border-top:3.5px solid transparent;border-bottom:3.5px solid transparent;border-left:4.5px solid #4a4a4a"></div>
<div class="t" style="left:409px;top:309.52px;color:#111">Spectral Libraries</div>
<div class="abs" style="left:396px;top:326.88px;width:0;height:0;border-top:3.5px solid transparent;border-bottom:3.5px solid transparent;border-left:4.5px solid #4a4a4a"></div>
<div class="t" style="left:409px;top:323.08px;color:#111">String</div>
<div class="abs" style="left:396px;top:340.44px;width:0;height:0;border-top:3.5px solid transparent;border-bottom:3.5px solid transparent;border-left:4.5px solid #4a4a4a"></div>
<div class="t" style="left:409px;top:336.64px;color:#111">Variables</div>
<div class="abs" style="left:396px;top:354.00px;width:0;height:0;border-top:3.5px solid transparent;border-bottom:3.5px solid transparent;border-left:4.5px solid #4a4a4a"></div>
<div class="t" style="left:409px;top:350.20px;color:#111">Recent (generic)</div>
<div class="field" style="left:707.2px;top:53.2px;width:320.5px;height:595.6px"></div>
<div class="abs" style="left:379px;top:346px;width:1px;height:14px;background:repeating-linear-gradient(#c4c4c4 0 1px,transparent 1px 3px)"></div>
<div class="abs" style="left:702px;top:346px;width:1px;height:14px;background:repeating-linear-gradient(#c4c4c4 0 1px,transparent 1px 3px)"></div>
<svg class="abs" style="left:0;top:0;pointer-events:none" width="1038" height="685" viewBox="267 67 1038 685"><path d="M283.3 123.2 H289 L292 126.3 V135.6 H283.3z" fill="#fff" stroke="#8a8a8a" stroke-width=".8"/><path d="M289 123.2 V126.3 H292" fill="none" stroke="#8a8a8a" stroke-width=".7"/><path d="M283.3 135.6 H292" stroke="#444" stroke-width=".9"/>
<rect x="304.2" y="123" width="10.6" height="12.4" rx="1.2" fill="#4a7fc1" stroke="#34619c" stroke-width=".6"/><rect x="306.3" y="123.6" width="6.4" height="4.6" fill="#d6d6d6"/><path d="M306.8 124.8 h5.4 M306.8 126.2 h5.4 M306.8 127.4 h5.4" stroke="#999" stroke-width=".5"/><rect x="306" y="131" width="6.8" height="3.6" fill="#f2f2f2"/><rect x="306.7" y="131.6" width="1.8" height="2.4" fill="#1b2f55"/>
<path d="M326 123.5 h7 l2 2 v10.5 h-9z" fill="#f6f6f6" stroke="#e3e3e3" stroke-width=".7"/><path d="M334.5 123.3 L336.3 124.5 L330.5 134.8 L328.8 136 L328.9 133.8z" fill="#eaeae4" stroke="#d6d6d0" stroke-width=".6"/>
<path d="M349.3 126.3 h8.8 M352 126.3 v-1.2 h3.4 v1.2" fill="none" stroke="#e3cfcf" stroke-width=".9"/><path d="M350 127.5 h7.4 l-.7 8.3 h-6z" fill="#f3eded" stroke="#e3cfcf" stroke-width=".8"/><path d="M352.2 128.5 v6 M355.2 128.5 v6" stroke="#e3cfcf" stroke-width=".8"/>
<path d="M374.6 123.2 h2.2 v5.3 h2.6 l-3.7 4.3 l-3.7 -4.3 h2.6z" fill="#4a80bf" stroke="#2c5b96" stroke-width=".5"/><rect x="369" y="133" width="13.2" height="2.7" fill="#2d5f9d"/><path d="M369 134.3 h13.2" stroke="#7da3d2" stroke-width=".5" stroke-dasharray="1 1"/>
<path d="M396.7 132.8 h2.2 v-5.3 h2.6 l-3.7 -4.3 l-3.7 4.3 h2.6z" fill="#f1e61e" stroke="#b3aa00" stroke-width=".5"/><rect x="391.2" y="133" width="13.2" height="2.7" fill="#2d5f9d"/><path d="M391.2 134.3 h13.2" stroke="#7da3d2" stroke-width=".5" stroke-dasharray="1 1"/></svg>
</div>
</div>
</body></html>
